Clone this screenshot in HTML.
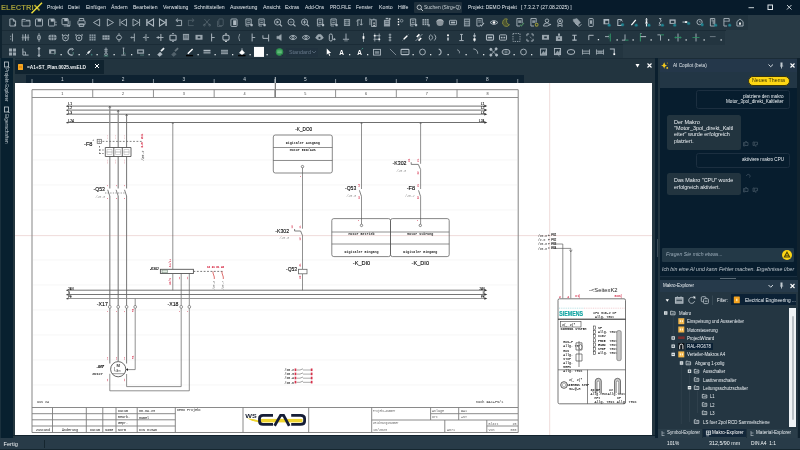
<!DOCTYPE html>
<html><head><meta charset="utf-8"><title>ELECTRIX</title>
<style>
*{margin:0;padding:0;box-sizing:border-box}
html,body{width:800px;height:450px;overflow:hidden;background:#253741;font-family:"Liberation Sans",sans-serif}
.a{position:absolute}
.t{position:absolute;white-space:nowrap;color:#e3e8ec;font-size:5.6px;line-height:7px}
#title{left:0;top:0;width:800px;height:15px;background:#071b2b}
#tb{left:0;top:15px;width:800px;height:43px;background:#283a45}
#lside{left:0;top:58px;width:15px;height:380px;background:#08202f}
#canvas{left:15px;top:83px;width:637px;height:352px;background:#fff}
#status{left:0;top:438px;width:800px;height:12px;background:#283b48}
.m{top:4px}
</style></head><body><div id="w" style="position:absolute;left:0;top:0;width:800px;height:450px;will-change:transform">

<div class="a" id="title"></div>
<div class="a" style="left:1px;top:3.4px;font-size:7.6px;line-height:9px;font-weight:bold;color:#9c9838;white-space:nowrap">ELECTRI</div>
<svg class="a" style="left:30px;top:0" width="16" height="15" viewBox="30 0 16 15"><path d="M34.5 5L39.5 10.5" stroke="#b5a82e" stroke-width="1.7"/><path d="M31.5 13.3L42 2.8" stroke="#efe03a" stroke-width="1.5"/></svg>
<div class="t" style="left:47px;top:4px;font-size:5.7px;color:#e6ebef;transform:scaleX(0.9019);transform-origin:0 0;">Projekt</div>
<div class="t" style="left:68.3px;top:4px;font-size:5.7px;color:#e6ebef;transform:scaleX(0.8792);transform-origin:0 0;">Datei</div>
<div class="t" style="left:85.5px;top:4px;font-size:5.7px;color:#e6ebef;transform:scaleX(0.8888);transform-origin:0 0;">Einfügen</div>
<div class="t" style="left:110.8px;top:4px;font-size:5.7px;color:#e6ebef;transform:scaleX(0.9085);transform-origin:0 0;">Ändern</div>
<div class="t" style="left:132.5px;top:4px;font-size:5.7px;color:#e6ebef;transform:scaleX(0.8886);transform-origin:0 0;">Bearbeiten</div>
<div class="t" style="left:162.5px;top:4px;font-size:5.7px;color:#e6ebef;transform:scaleX(0.9041);transform-origin:0 0;">Verwaltung</div>
<div class="t" style="left:193.8px;top:4px;font-size:5.7px;color:#e6ebef;transform:scaleX(0.9055);transform-origin:0 0;">Schnittstellen</div>
<div class="t" style="left:229.5px;top:4px;font-size:5.7px;color:#e6ebef;transform:scaleX(0.9136);transform-origin:0 0;">Auswertung</div>
<div class="t" style="left:262.5px;top:4px;font-size:5.7px;color:#e6ebef;transform:scaleX(0.9362);transform-origin:0 0;">Ansicht</div>
<div class="t" style="left:285px;top:4px;font-size:5.7px;color:#e6ebef;transform:scaleX(0.8852);transform-origin:0 0;">Extras</div>
<div class="t" style="left:304.5px;top:4px;font-size:5.7px;color:#e6ebef;transform:scaleX(0.8580);transform-origin:0 0;">Add-Ons</div>
<div class="t" style="left:329.5px;top:4px;font-size:5.7px;color:#e6ebef;transform:scaleX(0.8085);transform-origin:0 0;">PRO.FILE</div>
<div class="t" style="left:356.3px;top:4px;font-size:5.7px;color:#e6ebef;transform:scaleX(0.8642);transform-origin:0 0;">Fenster</div>
<div class="t" style="left:378.8px;top:4px;font-size:5.7px;color:#e6ebef;transform:scaleX(0.9197);transform-origin:0 0;">Konto</div>
<div class="t" style="left:397.5px;top:4px;font-size:5.7px;color:#e6ebef;transform:scaleX(0.9208);transform-origin:0 0;">Hilfe</div>
<div class="a" style="left:413.8px;top:2px;width:48.7px;height:11px;background:#1f303c;border-radius:1px"></div>
<svg class="a" style="left:416px;top:4px" width="8" height="8" viewBox="0 0 8 8"><circle cx="3.3" cy="3.3" r="2.2" stroke="#cfd6db" fill="none" stroke-width=".8"/><path d="M5 5L7 7" stroke="#cfd6db" stroke-width=".9"/></svg>
<div class="t" style="left:423.8px;top:4px;font-size:5.7px;color:#c9d1d6;transform:scaleX(0.8619);transform-origin:0 0;">Suchen (Strg+Q)</div>
<div class="t" style="left:468px;top:4px;font-size:5.7px;color:#e6ebef;transform:scaleX(0.8547);transform-origin:0 0;">Projekt: DEMO Projekt</div>
<div class="t" style="left:520.5px;top:4px;font-size:5.7px;color:#e6ebef;transform:scaleX(0.8808);transform-origin:0 0;">[ 7.3.2.7 (27.08.2025) ]</div>
<svg class="a" style="left:740px;top:0" width="60" height="15" viewBox="740 0 60 15"><path d="M748.5 7.7H754" stroke="#dfe5e9" stroke-width=".9"/><rect x="768" y="5" width="4.5" height="4.5" stroke="#dfe5e9" fill="none" stroke-width="1"/><path d="M787 5L791.5 9.5M791.5 5L787 9.5" stroke="#dfe5e9" stroke-width=".9"/></svg>
<div class="a" id="tb"></div>
<div class="a" style="left:0;top:15px;width:2px;height:43px;background:#10232f"></div>
<div class="a" style="left:2px;top:15px;width:745.5px;height:15px;background:#233540"></div>
<div class="a" style="left:2px;top:30px;width:723px;height:15px;background:#233540"></div>
<div class="a" style="left:2px;top:45px;width:621px;height:13px;background:#233540"></div>
<div class="a" style="left:2px;top:29.5px;width:724px;height:1px;background:#1a2b36"></div>
<div class="a" style="left:2px;top:44px;width:621px;height:1px;background:#1a2b36"></div>
<div class="a" style="left:286px;top:47.5px;width:32px;height:9px;background:#21323f;border-radius:1px"></div>
<div class="t" style="left:289px;top:48.5px;color:#66788a;font-size:5.4px">Standard</div>
<svg class="a" style="left:310px;top:49px" width="8" height="6" viewBox="0 0 8 6"><path d="M2 2L4 4L6 2" stroke="#5a6c7c" fill="none" stroke-width=".8"/></svg>
<svg class="a" style="left:0;top:0" width="800" height="60" viewBox="0 0 800 60" fill="none" stroke-linecap="butt"><g transform="translate(12.5,22.5) scale(0.88)"><path d="M-3-4H1L3.5-1.5V4H-3Z" stroke="#aeb9c1" fill="none" stroke-width="1" opacity="1"/><path d="M1-4V-1.5H3.5" stroke="#aeb9c1" fill="none" stroke-width="1" opacity="1"/><rect x="2" y="2" width="1.6" height="1.6" rx="0" stroke="none" fill="#aeb9c1" stroke-width="1" opacity="1"/></g><g transform="translate(26,22.5) scale(0.88)"><path d="M-4.5-3.5H-1L0-2.5H4.5V4H-4.5Z" stroke="#aeb9c1" fill="none" stroke-width="1" opacity="1"/><path d="M-4.5-1.5H4.5" stroke="#aeb9c1" fill="none" stroke-width="1" opacity="0.6"/></g><g transform="translate(39,22.5) scale(0.88)"><rect x="-4" y="-4" width="8" height="8" rx="0.8" stroke="#aeb9c1" fill="none" stroke-width="1" opacity="1"/><rect x="-1.5" y="-4" width="4" height="3" rx="0" stroke="none" fill="#aeb9c1" stroke-width="1" opacity="1"/></g><g transform="translate(52.5,22.5) scale(0.88)"><rect x="-4.5" y="-4" width="7" height="8" rx="0.8" stroke="#aeb9c1" fill="none" stroke-width="1" opacity="1"/><rect x="-2" y="-4" width="3.5" height="3" rx="0" stroke="none" fill="#aeb9c1" stroke-width="1" opacity="1"/><rect x="3.3" y="-1" width="1.2" height="1.2" rx="0" stroke="none" fill="#aeb9c1" stroke-width="1" opacity="1"/><rect x="3.3" y="2" width="1.4" height="1.4" rx="0" stroke="none" fill="#aeb9c1" stroke-width="1" opacity="1"/></g><g transform="translate(66,22.5) scale(0.88)"><rect x="-4.5" y="-4.5" width="7" height="7" rx="0.8" stroke="#aeb9c1" fill="none" stroke-width="1" opacity="1"/><rect x="-2" y="-4.5" width="4" height="3" rx="0" stroke="none" fill="#aeb9c1" stroke-width="1" opacity="1"/><path d="M-2.5 4H4.5V-2" stroke="#aeb9c1" fill="none" stroke-width="1" opacity="0.8"/><rect x="1" y="3" width="3.5" height="1.5" rx="0" stroke="none" fill="#aeb9c1" stroke-width="1" opacity="0.8"/></g><g transform="translate(81.5,22.5) scale(0.88)"><rect x="-4" y="-2" width="8" height="4.5" rx="0.8" stroke="#aeb9c1" fill="none" stroke-width="1" opacity="1"/><path d="M-2.5-2V-4.5H2.5V-2" stroke="#aeb9c1" fill="none" stroke-width="1" opacity="1"/><path d="M-2.5 1.5H2.5V4.5H-2.5Z" stroke="#aeb9c1" fill="none" stroke-width="1" opacity="1"/></g><g transform="translate(97,22.5) scale(0.88)"><path d="M3-4V4L-4 0Z" stroke="#aeb9c1" fill="none" stroke-width="1" opacity="1"/></g><g transform="translate(110,22.5) scale(0.88)"><path d="M-3-4V4L4 0Z" stroke="#aeb9c1" fill="none" stroke-width="1" opacity="1"/></g><g transform="translate(123,22.5) scale(0.88)"><path d="M4-4V4L-2.5 0Z" stroke="#aeb9c1" fill="none" stroke-width="1" opacity="1"/><path d="M-3.5-4V4" stroke="#aeb9c1" fill="none" stroke-width="1" opacity="1"/></g><g transform="translate(136.5,22.5) scale(0.88)"><path d="M-4-4V4L2.5 0Z" stroke="#aeb9c1" fill="none" stroke-width="1" opacity="1"/><path d="M3.5-4V4" stroke="#aeb9c1" fill="none" stroke-width="1" opacity="1"/></g><g transform="translate(150,22.5) scale(0.88)"><path d="M4-4V4L-2.5 0Z" stroke="#aeb9c1" fill="none" stroke-width="1.2" opacity="1"/><path d="M-3.5-4V4" stroke="#aeb9c1" fill="none" stroke-width="1.6" opacity="1"/></g><g transform="translate(163,22.5) scale(0.88)"><path d="M-4-4V4L2.5 0Z" stroke="#aeb9c1" fill="none" stroke-width="1.2" opacity="1"/><path d="M3.5-4V4" stroke="#aeb9c1" fill="none" stroke-width="1.6" opacity="1"/></g><g transform="translate(178.5,22.5) scale(0.88)"><path d="M-2-2.5H3.5V3.5H-2.5" stroke="#aeb9c1" fill="none" stroke-width="1" opacity="1"/><path d="M-0.5-4.5L-3-2.5L-0.5-0.5" stroke="#aeb9c1" fill="none" stroke-width="1" opacity="1"/></g><g transform="translate(191.5,22.5) scale(0.88)"><path d="M2-2.5H-3.5V3.5H2.5" stroke="#aeb9c1" fill="none" stroke-width="1" opacity="0.3"/><path d="M0.5-4.5L3-2.5L0.5-0.5" stroke="#aeb9c1" fill="none" stroke-width="1" opacity="0.3"/></g><g transform="translate(207,22.5) scale(0.88)"><path d="M-3-4L3 3M3-4L-3 3" stroke="#aeb9c1" fill="none" stroke-width="1" opacity="0.3"/><circle cx="-3" cy="3" r="1" stroke="#aeb9c1" fill="none" stroke-width="1" opacity="0.3"/><circle cx="3" cy="3" r="1" stroke="#aeb9c1" fill="none" stroke-width="1" opacity="0.3"/></g><g transform="translate(221,22.5) scale(0.88)"><rect x="-2.5" y="-4" width="5" height="7.5" rx="0.8" stroke="#aeb9c1" fill="none" stroke-width="1" opacity="0.3"/><path d="M-4-2V4.5H1" stroke="#aeb9c1" fill="none" stroke-width="1" opacity="0.3"/></g><g transform="translate(234,22.5) scale(0.88)"><rect x="-3.5" y="-4" width="7" height="8.5" rx="1" stroke="#aeb9c1" fill="none" stroke-width="1" opacity="1"/><rect x="-1" y="-2.5" width="3.5" height="5.5" rx="0" stroke="none" fill="#aeb9c1" stroke-width="1" opacity="1"/></g><g transform="translate(249,22.5) scale(0.88)"><path d="M-3.5-4H2.5V2H-3.5Z" stroke="#aeb9c1" fill="none" stroke-width="1" opacity="1"/><path d="M-2-2H1M-2 0H1" stroke="#aeb9c1" fill="none" stroke-width="1" opacity="0.8"/><rect x="1.6" y="1.6" width="2.6" height="2.6" rx="0.5" stroke="none" fill="#aeb9c1" stroke-width="1" opacity="1"/><path d="M-3.5 2V4H0" stroke="#aeb9c1" fill="none" stroke-width="1" opacity="0.8"/></g><g transform="translate(262,22.5) scale(0.88)"><path d="M-3.5-4H2.5V2H-3.5Z" stroke="#aeb9c1" fill="none" stroke-width="1" opacity="1"/><path d="M-2-2H1M-2 0H1" stroke="#aeb9c1" fill="none" stroke-width="1" opacity="0.8"/><rect x="1.6" y="1.6" width="2.6" height="2.6" rx="0.5" stroke="none" fill="#aeb9c1" stroke-width="1" opacity="1"/><path d="M-3.5 2V4H0" stroke="#aeb9c1" fill="none" stroke-width="1" opacity="0.8"/></g><g transform="translate(278,22.5) scale(0.88)"><circle cx="-0.5" cy="-0.5" r="3.5" stroke="#aeb9c1" fill="none" stroke-width="1" opacity="1"/><path d="M2 2L4.5 4.5" stroke="#aeb9c1" fill="none" stroke-width="1.3" opacity="1"/><path d="M-1.5-2L1-.5L-1.5 1Z" stroke="#aeb9c1" fill="#aeb9c1" stroke-width="0.3" opacity="1"/></g><g transform="translate(291.5,22.5) scale(0.88)"><circle cx="-0.5" cy="-0.5" r="3.5" stroke="#aeb9c1" fill="none" stroke-width="1" opacity="1"/><path d="M2 2L4.5 4.5" stroke="#aeb9c1" fill="none" stroke-width="1.3" opacity="1"/><path d="M-2-.5H1" stroke="#aeb9c1" fill="none" stroke-width="1" opacity="0.8"/></g><g transform="translate(305,22.5) scale(0.88)"><circle cx="-0.5" cy="-0.5" r="3.5" stroke="#aeb9c1" fill="none" stroke-width="1" opacity="1"/><path d="M2 2L4.5 4.5" stroke="#aeb9c1" fill="none" stroke-width="1.3" opacity="1"/><path d="M-2.5-.5H1.5M-.5-2.5V1.5" stroke="#aeb9c1" fill="none" stroke-width="1" opacity="1"/></g><g transform="translate(320.5,22.5) scale(0.88)"><path d="M-3.5-4H2.5V2H-3.5Z" stroke="#aeb9c1" fill="none" stroke-width="1" opacity="1"/><path d="M-2-2H1M-2 0H1" stroke="#aeb9c1" fill="none" stroke-width="1" opacity="0.8"/><rect x="1.6" y="1.6" width="2.6" height="2.6" rx="0.5" stroke="none" fill="#aeb9c1" stroke-width="1" opacity="1"/><path d="M-3.5 2V4H0" stroke="#aeb9c1" fill="none" stroke-width="1" opacity="0.8"/></g><g transform="translate(334,22.5) scale(0.88)"><path d="M-3.5-4H2.5V2H-3.5Z" stroke="#aeb9c1" fill="none" stroke-width="1" opacity="1"/><path d="M-2-2H1M-2 0H1" stroke="#aeb9c1" fill="none" stroke-width="1" opacity="0.8"/><rect x="1.6" y="1.6" width="2.6" height="2.6" rx="0.5" stroke="none" fill="#aeb9c1" stroke-width="1" opacity="1"/><path d="M-3.5 2V4H0" stroke="#aeb9c1" fill="none" stroke-width="1" opacity="0.8"/></g><g transform="translate(347,22.5) scale(0.88)"><rect x="-3.5" y="-4" width="7" height="8" rx="0" stroke="none" fill="#aeb9c1" stroke-width="1" opacity="0.75"/><path d="M-2.5-2H2.5M-2.5 0H2.5M-2.5 2H2.5M0-3V3" stroke="#233540" fill="none" stroke-width="0.7" opacity="1"/></g><g transform="translate(360,22.5) scale(0.88)"><path d="M-2.5 4V-3L-4-1.5M-2.5-3H0" stroke="#aeb9c1" fill="none" stroke-width="1" opacity="1"/><path d="M1.5-4V3L3 1.5M1.5 3L0 1.5" stroke="#aeb9c1" fill="none" stroke-width="1" opacity="1"/></g><g transform="translate(373,22.5) scale(0.88)"><rect x="-1.5" y="-3" width="5" height="7.5" rx="0" stroke="#aeb9c1" fill="none" stroke-width="1" opacity="1"/><path d="M-3.5-4V3" stroke="#aeb9c1" fill="none" stroke-width="1" opacity="0.9"/><path d="M-3.5-4.5L-2-3M1-4.5V-3" stroke="#aeb9c1" fill="none" stroke-width="1" opacity="1"/><rect x="0.5" y="2.6" width="1.4" height="1.4" rx="0" stroke="none" fill="#fff" stroke-width="1" opacity="1"/><rect x="0.5" y="0" width="1.4" height="1.4" rx="0" stroke="none" fill="#fff" stroke-width="1" opacity="1"/></g><g transform="translate(387,22.5) scale(0.88)"><rect x="-3.5" y="-3" width="7" height="7.5" rx="0" stroke="none" fill="#aeb9c1" stroke-width="1" opacity="0.8"/><path d="M-1.5-4.5H1.5" stroke="#aeb9c1" fill="none" stroke-width="1.5" opacity="1"/><path d="M2-4L4-5M-2-1H2M-2 1H2" stroke="#233540" fill="none" stroke-width="0.6" opacity="1"/><rect x="2" y="-5" width="2" height="2" rx="0" stroke="none" fill="#aeb9c1" stroke-width="1" opacity="1"/></g><g transform="translate(398.5,22.5) scale(0.88)"><rect x="-0.8" y="-4.5" width="1.6" height="1.6" rx="0" stroke="none" fill="#fff" stroke-width="1" opacity="1"/><rect x="-0.8" y="-1.5" width="1.6" height="1.6" rx="0" stroke="none" fill="#fff" stroke-width="1" opacity="1"/><rect x="-0.8" y="1.5" width="1.6" height="1.6" rx="0" stroke="none" fill="#fff" stroke-width="1" opacity="1"/></g><g transform="translate(402.5,22.5) scale(0.88)"><circle cx="-1" cy="-2" r="1.5" stroke="#aeb9c1" fill="none" stroke-width="1" opacity="0.7"/></g><g transform="translate(413.5,22.5) scale(0.88)"><path d="M-3.5-4H2.5V2H-3.5Z" stroke="#aeb9c1" fill="none" stroke-width="1" opacity="1"/><path d="M-2-2H1M-2 0H1" stroke="#aeb9c1" fill="none" stroke-width="1" opacity="0.8"/><rect x="1.6" y="1.6" width="2.6" height="2.6" rx="0.5" stroke="none" fill="#aeb9c1" stroke-width="1" opacity="1"/><path d="M-3.5 2V4H0" stroke="#aeb9c1" fill="none" stroke-width="1" opacity="0.8"/></g><g transform="translate(426,22.5) scale(0.88)"><rect x="-4" y="-4" width="7" height="7" rx="0" stroke="none" fill="#aeb9c1" stroke-width="1" opacity="0.9"/><path d="M-1.7-4V3M.7-4V3M-4-1.7H3M-4 .7H3" stroke="#233540" fill="none" stroke-width="0.7" opacity="1"/><rect x="2" y="2" width="2.5" height="2.5" rx="0" stroke="none" fill="#aeb9c1" stroke-width="1" opacity="0.7"/></g><g transform="translate(440,22.5) scale(0.88)"><circle cx="0" cy="0" r="4" stroke="none" fill="#8a949b" stroke-width="1" opacity="1"/><path d="M-4-1A4 2 0 0 1 4-1" stroke="#c8d0d5" fill="none" stroke-width="0.7" opacity="1"/></g><g transform="translate(453,22.5) scale(0.88)"><rect x="-4" y="-2.5" width="8" height="5" rx="0.8" stroke="#aeb9c1" fill="none" stroke-width="1" opacity="1"/><rect x="-2.5" y="-1" width="5" height="2" rx="0" stroke="none" fill="#aeb9c1" stroke-width="1" opacity="1"/></g><g transform="translate(467,22.5) scale(0.88)"><rect x="-3.5" y="-4.5" width="7" height="9" rx="0" stroke="none" fill="#aeb9c1" stroke-width="1" opacity="0.75"/><path d="M-2.5-2.5H2.5" stroke="#233540" fill="none" stroke-width="1" opacity="1"/><path d="M-2.5 0H2.5M-2.5 2H2.5M-1-1V3.5M1-1V3.5" stroke="#233540" fill="none" stroke-width="0.6" opacity="1"/></g><g transform="translate(480,22.5) scale(0.88)"><path d="M-3.5-4.5H2.5V1M-3.5-4.5V4H0" stroke="#aeb9c1" fill="none" stroke-width="1" opacity="1"/><path d="M-2-2.5H1M-2-.5H1" stroke="#aeb9c1" fill="none" stroke-width="1" opacity="0.8"/><path d="M0 2.5L1.5 4L4.5 .5" stroke="#aeb9c1" fill="none" stroke-width="1.2" opacity="1"/></g><g transform="translate(494,22.5) scale(0.88)"><path d="M-4.5 0Q0-4.5 4.5 0Q0 4.5-4.5 0Z" stroke="#aeb9c1" fill="none" stroke-width="1" opacity="1"/><circle cx="0" cy="0" r="1.5" stroke="none" fill="#fff" stroke-width="1" opacity="1"/></g><g transform="translate(506,22.5) scale(0.88)"><path d="M1.5-4A4.3 4.3 0 1 0 4 2.5A4 4 0 0 1 1.5-4Z" stroke="#8f9440" fill="#4a5232" stroke-width="0.9" opacity="1"/></g><g transform="translate(520,22.5) scale(0.88)"><path d="M-3.5-4.5H2.5V1M-3.5-4.5V4H0" stroke="#aeb9c1" fill="none" stroke-width="1" opacity="1"/><rect x="-2" y="-2.5" width="3.5" height="3" rx="0" stroke="none" fill="#aeb9c1" stroke-width="1" opacity="0.7"/><path d="M0 2.5L1.5 4L4.5 .5" stroke="#4d8b62" fill="none" stroke-width="1.2" opacity="1"/></g><g transform="translate(534,22.5) scale(0.88)"><path d="M-3.5-4.5H2.5V0M-3.5-4.5V4H0" stroke="#aeb9c1" fill="none" stroke-width="1" opacity="1"/><rect x="-2" y="-2.5" width="3.5" height="3" rx="0" stroke="none" fill="#aeb9c1" stroke-width="1" opacity="0.7"/><circle cx="3" cy="2.5" r="1.6" stroke="#97983c" fill="none" stroke-width="1.2" opacity="1"/></g><g transform="translate(547,22.5) scale(0.88)"><circle cx="0" cy="-2" r="2" stroke="#aeb9c1" fill="none" stroke-width="1" opacity="1"/><path d="M-4 4Q-4 .5 0 .5Q2 .5 3 2M-4 4H1" stroke="#aeb9c1" fill="none" stroke-width="1" opacity="1"/><path d="M1 3.5L4.5 2" stroke="#aeb9c1" fill="none" stroke-width="1.2" opacity="1"/></g><g transform="translate(560,22.5) scale(0.88)"><circle cx="0" cy="-1.5" r="2.8" stroke="#aeb9c1" fill="none" stroke-width="1" opacity="1"/><circle cx="0" cy="-1.5" r="0.8" stroke="#aeb9c1" fill="#aeb9c1" stroke-width="1" opacity="1"/><path d="M-2 1L-2.5 4.5L0 3L2.5 4.5L2 1" stroke="#aeb9c1" fill="none" stroke-width="1" opacity="1"/></g><g transform="translate(577,22.5) scale(0.88)"><path d="M-4.5-3.5L0-4.5L4 0L.5 3.5L-4-1Z" stroke="#aeb9c1" fill="#aeb9c1" stroke-width="0.5" opacity="0.8"/><path d="M-2 1L2.5 4.5L5 2" stroke="#aeb9c1" fill="none" stroke-width="1" opacity="1"/></g><g transform="translate(591,22.5) scale(0.88)"><rect x="-2.5" y="-4.5" width="5" height="9" rx="0.8" stroke="#aeb9c1" fill="none" stroke-width="1" opacity="1"/><rect x="-1" y="-2.5" width="2" height="4" rx="0" stroke="none" fill="#aeb9c1" stroke-width="1" opacity="1"/></g><g transform="translate(607,22.5) scale(0.88)"><rect x="-4" y="-4" width="6.5" height="6" rx="0" stroke="none" fill="#aeb9c1" stroke-width="1" opacity="1"/><rect x="-2" y="-2" width="3.5" height="3" rx="0" stroke="none" fill="#233540" stroke-width="1" opacity="1"/><circle cx="2.5" cy="3" r="2.2" stroke="none" fill="#1f7f8c" stroke-width="1" opacity="0.35"/><circle cx="2.5" cy="3" r="1.4" stroke="none" fill="#1f8592" stroke-width="1" opacity="1"/></g><g transform="translate(620,22.5) scale(0.88)"><path d="M-2.5-3.5H1.5V-2M1.5 2V3.5H-2.5V-3.5" stroke="#aeb9c1" fill="none" stroke-width="1.2" opacity="1"/><path d="M0-1L1.5-3L3-1" stroke="#aeb9c1" fill="none" stroke-width="0.8" opacity="1"/><circle cx="3" cy="2.5" r="2.2" stroke="none" fill="#1f7f8c" stroke-width="1" opacity="0.35"/><circle cx="3" cy="2.5" r="1.4" stroke="none" fill="#1f8592" stroke-width="1" opacity="1"/></g><g transform="translate(634,22.5) scale(0.88)"><path d="M-3 3L2-3" stroke="#fff" fill="none" stroke-width="1.4" opacity="1"/><circle cx="2.5" cy="3" r="2.2" stroke="none" fill="#1f7f8c" stroke-width="1" opacity="0.35"/><circle cx="2.5" cy="3" r="1.4" stroke="none" fill="#1f8592" stroke-width="1" opacity="1"/></g><g transform="translate(646.5,22.5) scale(0.88)"><path d="M0-5V4.5" stroke="#e8edf0" fill="none" stroke-width="1.3" opacity="1"/><path d="M-1.5-3H1.5M-1.5 1H1.5" stroke="#aeb9c1" fill="none" stroke-width="1" opacity="1"/><rect x="-1" y="-1" width="2" height="1.5" rx="0" stroke="none" fill="#fff" stroke-width="1" opacity="1"/><circle cx="2.8" cy="3" r="2.2" stroke="none" fill="#1f7f8c" stroke-width="1" opacity="0.35"/><circle cx="2.8" cy="3" r="1.4" stroke="none" fill="#1f8592" stroke-width="1" opacity="1"/></g><g transform="translate(660,22.5) scale(0.88)"><path d="M-1-4.5H1.5M0-4.5L1.5-1.5L-1 .5L1 3H-1.5" stroke="#aeb9c1" fill="none" stroke-width="1" opacity="1"/><circle cx="2.8" cy="3" r="2.2" stroke="none" fill="#1f7f8c" stroke-width="1" opacity="0.35"/><circle cx="2.8" cy="3" r="1.4" stroke="none" fill="#1f8592" stroke-width="1" opacity="1"/></g><g transform="translate(673,22.5) scale(0.88)"><rect x="-4" y="-3.5" width="7" height="5" rx="0" stroke="none" fill="#aeb9c1" stroke-width="1" opacity="1"/><rect x="-2.5" y="-2" width="4" height="2.5" rx="0" stroke="none" fill="#233540" stroke-width="1" opacity="1"/><circle cx="2" cy="3" r="2.2" stroke="none" fill="#1f7f8c" stroke-width="1" opacity="0.35"/><circle cx="2" cy="3" r="1.4" stroke="none" fill="#1f8592" stroke-width="1" opacity="1"/></g><g transform="translate(686,22.5) scale(0.88)"><path d="M-4-.5H2" stroke="#aeb9c1" fill="none" stroke-width="1.2" opacity="1"/><rect x="-1" y="-1.5" width="2" height="2" rx="0" stroke="none" fill="#fff" stroke-width="1" opacity="1"/><circle cx="3" cy="1" r="2.2" stroke="none" fill="#1f7f8c" stroke-width="1" opacity="0.35"/><circle cx="3" cy="1" r="1.4" stroke="none" fill="#1f8592" stroke-width="1" opacity="1"/></g><g transform="translate(700,22.5) scale(0.88)"><circle cx="-0.5" cy="-0.5" r="3" stroke="#aeb9c1" fill="none" stroke-width="1" opacity="1"/><path d="M-.5-2V-.5H1" stroke="#aeb9c1" fill="none" stroke-width="0.7" opacity="1"/><circle cx="2.5" cy="2.5" r="2.2" stroke="none" fill="#1f7f8c" stroke-width="1" opacity="0.35"/><circle cx="2.5" cy="2.5" r="1.4" stroke="none" fill="#1f8592" stroke-width="1" opacity="1"/></g><g transform="translate(713,22.5) scale(0.88)"><path d="M-3-4.5H2V4H-3Z" stroke="#aeb9c1" fill="none" stroke-width="1" opacity="1"/><path d="M-1-4.5V-1" stroke="#aeb9c1" fill="none" stroke-width="1" opacity="0.8"/><rect x="-0.5" y="-3" width="2" height="5" rx="0" stroke="none" fill="#aeb9c1" stroke-width="1" opacity="0.6"/><circle cx="3" cy="3" r="2.2" stroke="none" fill="#1f7f8c" stroke-width="1" opacity="0.35"/><circle cx="3" cy="3" r="1.4" stroke="none" fill="#1f8592" stroke-width="1" opacity="1"/></g><g transform="translate(727,22.5) scale(0.88)"><path d="M-3.5-4.5H2.5V-1M-3.5-4.5V4H0" stroke="#aeb9c1" fill="none" stroke-width="1" opacity="1"/><path d="M-3.5-1.5H2.5" stroke="#aeb9c1" fill="none" stroke-width="1" opacity="0.8"/><circle cx="3" cy="3" r="2.2" stroke="none" fill="#1f7f8c" stroke-width="1" opacity="0.35"/><circle cx="3" cy="3" r="1.4" stroke="none" fill="#1f8592" stroke-width="1" opacity="1"/></g><g transform="translate(740,22.5) scale(0.88)"><path d="M-3.5-1L0-4L3.5-1V4H-3.5Z" stroke="#aeb9c1" fill="none" stroke-width="1" opacity="1"/><rect x="-1" y="0" width="2" height="2.5" rx="0" stroke="none" fill="#fff" stroke-width="1" opacity="1"/></g><g transform="translate(12,37.5) scale(0.88)"><path d="M.5-4.5V4.5" stroke="#aeb9c1" fill="none" stroke-width="1" opacity="1"/><path d="M-1.5-2V-.5M-1.5 1V2.5" stroke="#aeb9c1" fill="none" stroke-width="0.9" opacity="0.8"/></g><g transform="translate(25.5,37.5) scale(0.88)"><path d="M-4.5 0H4.5" stroke="#aeb9c1" fill="none" stroke-width="0.7" opacity="0.7"/><path d="M-3-3.5V3.5M0-4V4M3-3.5V3.5" stroke="#aeb9c1" fill="none" stroke-width="1" opacity="1"/><path d="M-1.5-2V2M1.5-2V2" stroke="#aeb9c1" fill="none" stroke-width="0.7" opacity="0.7"/></g><g transform="translate(39,37.5) scale(0.88)"><path d="M0-5V5" stroke="#aeb9c1" fill="none" stroke-width="0.8" opacity="1"/><rect x="-1.5" y="-2.5" width="3" height="5" rx="1.2" stroke="#aeb9c1" fill="none" stroke-width="1" opacity="1"/></g><g transform="translate(52.5,37.5) scale(0.88)"><rect x="-4.5" y="-3" width="9" height="6" rx="2" stroke="none" fill="#aeb9c1" stroke-width="1" opacity="0.8"/><path d="M-1.5-3.5V4M1.5-3.5V4" stroke="#233540" fill="none" stroke-width="0.8" opacity="1"/><path d="M-4.5 0H4.5" stroke="#233540" fill="none" stroke-width="0.5" opacity="1"/></g><g transform="translate(65.5,37.5) scale(0.88)"><circle cx="0" cy="0.5" r="3.3" stroke="#aeb9c1" fill="none" stroke-width="1" opacity="1"/><path d="M-3.5-4V-1.5M3.5-4V-1.5" stroke="#aeb9c1" fill="none" stroke-width="1" opacity="1"/><rect x="-1" y="-0.5" width="2" height="2" rx="0" stroke="none" fill="#aeb9c1" stroke-width="1" opacity="0.8"/></g><g transform="translate(79,37.5) scale(0.88)"><circle cx="0" cy="0.5" r="3.3" stroke="#aeb9c1" fill="none" stroke-width="1" opacity="1"/><path d="M-3.5-4V-1.5M3.5-4V-1.5" stroke="#aeb9c1" fill="none" stroke-width="1" opacity="1"/><rect x="-1" y="-0.5" width="2" height="2" rx="0" stroke="none" fill="#aeb9c1" stroke-width="1" opacity="0.8"/></g><g transform="translate(92.5,37.5) scale(0.88)"><rect x="-3.5" y="-3.5" width="7" height="7" rx="0" stroke="none" fill="#aeb9c1" stroke-width="1" opacity="0.75"/><path d="M-1.2-4V4M1.2-4V4M-3.5-1.2H3.5M-3.5 1.2H3.5" stroke="#233540" fill="none" stroke-width="0.6" opacity="1"/></g><g transform="translate(106,37.5) scale(0.88)"><rect x="-4" y="-2.5" width="8" height="5" rx="0" stroke="none" fill="#aeb9c1" stroke-width="1" opacity="0.85"/><path d="M-1.5-2.5V2.5M1.5-2.5V2.5M-4 0H4" stroke="#233540" fill="none" stroke-width="0.5" opacity="1"/></g><g transform="translate(119,37.5) scale(0.88)"><path d="M0-5V-2.5M0 2.5V5" stroke="#aeb9c1" fill="none" stroke-width="0.9" opacity="1"/><path d="M-3 0L-1.5-2.5H1.5L3 0L1.5 2.5H-1.5Z" stroke="#aeb9c1" fill="none" stroke-width="1" opacity="1"/></g><g transform="translate(133,37.5) scale(0.88)"><path d="M1.5-4.5V4.5" stroke="#aeb9c1" fill="none" stroke-width="1" opacity="1"/><path d="M-2.5 0H1.5" stroke="#aeb9c1" fill="none" stroke-width="0.9" opacity="1"/><path d="M-1-1.5L-2.5 0L-1 1.5" stroke="#aeb9c1" fill="none" stroke-width="0.7" opacity="0.8"/></g><g transform="translate(146,37.5) scale(0.88)"><path d="M0-4V4" stroke="#aeb9c1" fill="none" stroke-width="1" opacity="0.9"/><path d="M-3.5 0H-1M1 0H3.5" stroke="#aeb9c1" fill="none" stroke-width="0.9" opacity="1"/><path d="M-1.5-1.5L0 0L-1.5 1.5" stroke="#aeb9c1" fill="none" stroke-width="0.7" opacity="1"/></g><g transform="translate(160,37.5) scale(0.88)"><path d="M1-4V4" stroke="#aeb9c1" fill="none" stroke-width="1.1" opacity="1"/><path d="M-4 0H4" stroke="#aeb9c1" fill="none" stroke-width="1" opacity="1"/><path d="M-2-1.5V1.5" stroke="#aeb9c1" fill="none" stroke-width="1.2" opacity="1"/></g><g transform="translate(173,37.5) scale(0.88)"><rect x="-3.5" y="-2.5" width="7" height="5.5" rx="0.8" stroke="#aeb9c1" fill="none" stroke-width="1.2" opacity="1"/><path d="M-1-4.5H1M-1 4.5H1" stroke="#aeb9c1" fill="none" stroke-width="1" opacity="1"/></g><g transform="translate(186,37.5) scale(0.88)"><rect x="-3.5" y="-3" width="7" height="6" rx="0" stroke="none" fill="#aeb9c1" stroke-width="1" opacity="0.7"/><path d="M-1.2-3V1M1.2-3V1" stroke="#233540" fill="none" stroke-width="0.7" opacity="1"/><path d="M-3.5-3.5H3.5" stroke="#aeb9c1" fill="none" stroke-width="1" opacity="1"/></g><g transform="translate(199,37.5) scale(0.88)"><rect x="-4" y="-3" width="8" height="5.5" rx="0" stroke="none" fill="#aeb9c1" stroke-width="1" opacity="0.85"/><rect x="-1.5" y="-1.2" width="3" height="2" rx="0" stroke="none" fill="#233540" stroke-width="1" opacity="1"/></g><g transform="translate(212.5,37.5) scale(0.88)"><path d="M-1-4.5V4.5" stroke="#aeb9c1" fill="none" stroke-width="1.1" opacity="1"/><path d="M-1 0H2.5" stroke="#aeb9c1" fill="none" stroke-width="1" opacity="1"/></g><g transform="translate(226,37.5) scale(0.88)"><rect x="-3.5" y="-2.5" width="7" height="5.5" rx="1.5" stroke="#aeb9c1" fill="none" stroke-width="1.2" opacity="1"/><path d="M-1-4H1M-1 4.5H1" stroke="#fff" fill="none" stroke-width="1" opacity="1"/></g><g transform="translate(239,37.5) scale(0.88)"><path d="M.8-4Q-1.5 0 .8 4" stroke="#aeb9c1" fill="none" stroke-width="1" opacity="0.8"/></g><g transform="translate(253,37.5) scale(0.88)"><path d="M-1-4.5V4.5" stroke="#aeb9c1" fill="none" stroke-width="1.1" opacity="1"/><path d="M-1 0H2.5" stroke="#aeb9c1" fill="none" stroke-width="1" opacity="1"/></g><g transform="translate(266,37.5) scale(0.88)"><path d="M-3.5-2.5V1H3V-3.5M3 1V4.5" stroke="#aeb9c1" fill="none" stroke-width="1.1" opacity="1"/></g><g transform="translate(279.5,37.5) scale(0.88)"><path d="M2-3.5V3.5L-1 1.5H-3V-1.5H-1Z" stroke="#aeb9c1" fill="#aeb9c1" stroke-width="0.5" opacity="0.85"/></g><g transform="translate(293,37.5) scale(0.88)"><path d="M-4.5 0Q0-5 4.5 0Q0 5-4.5 0Z" stroke="#aeb9c1" fill="none" stroke-width="1" opacity="1"/><circle cx="0" cy="0" r="1.3" stroke="#aeb9c1" fill="none" stroke-width="1" opacity="1"/></g><g transform="translate(306,37.5) scale(0.88)"><path d="M-4.5 0Q0-5 4.5 0Q0 5-4.5 0Z" stroke="#aeb9c1" fill="none" stroke-width="1" opacity="1"/><circle cx="0" cy="0" r="1.3" stroke="#aeb9c1" fill="none" stroke-width="1" opacity="1"/></g><g transform="translate(319.5,37.5) scale(0.88)"><path d="M-4.5.5Q-2-4.5 0-3.5Q2-4.5 4.5 .5Q0 5-4.5 .5Z" stroke="#aeb9c1" fill="#aeb9c1" stroke-width="0.6" opacity="0.85"/><circle cx="0" cy="0.5" r="1.3" stroke="none" fill="#233540" stroke-width="1" opacity="1"/></g><g transform="translate(331.5,37.5) scale(0.88)"><rect x="-2.5" y="-4" width="3.5" height="8" rx="1.7" stroke="#aeb9c1" fill="none" stroke-width="1.1" opacity="1"/><path d="M1.5 2H4" stroke="#aeb9c1" fill="none" stroke-width="0.9" opacity="1"/><circle cx="3.5" cy="2" r="0.7" stroke="#aeb9c1" fill="#aeb9c1" stroke-width="1" opacity="1"/></g><g transform="translate(346,37.5) scale(0.88)"><path d="M0-4.5V2" stroke="#aeb9c1" fill="none" stroke-width="1" opacity="1"/><path d="M-3.5 2H3.5" stroke="#aeb9c1" fill="none" stroke-width="1" opacity="1"/><path d="M-2 3.8H2" stroke="#aeb9c1" fill="none" stroke-width="0.8" opacity="0.8"/></g><g transform="translate(363.5,37.5) scale(0.88)"><path d="M0-5V5" stroke="#aeb9c1" fill="none" stroke-width="0.9" opacity="1"/><rect x="-1" y="-1.5" width="2" height="3" rx="0" stroke="none" fill="#fff" stroke-width="1" opacity="1"/></g><g transform="translate(377,37.5) scale(0.88)"><path d="M-2.5-4.5V4.5M2.5-4.5V4.5" stroke="#aeb9c1" fill="none" stroke-width="0.9" opacity="1"/><path d="M-4-2H4M-4 2H4" stroke="#aeb9c1" fill="none" stroke-width="0.9" opacity="1"/><rect x="-3.3" y="-2.8" width="1.6" height="1.6" rx="0" stroke="none" fill="#fff" stroke-width="1" opacity="1"/><rect x="1.7" y="1.2" width="1.6" height="1.6" rx="0" stroke="none" fill="#fff" stroke-width="1" opacity="1"/></g><g transform="translate(390,37.5) scale(0.88)"><path d="M0-4.5V4.5" stroke="#aeb9c1" fill="none" stroke-width="0.9" opacity="1"/><path d="M-1.5-3H1.5M-1.5 3H1.5M-1.5 0H1.5" stroke="#aeb9c1" fill="none" stroke-width="0.9" opacity="1"/></g><g transform="translate(405.5,37.5) scale(0.88)"><path d="M-2 2L2-2" stroke="#fff" fill="none" stroke-width="1.5" opacity="1"/><path d="M-3.5 3.5L-2 2M2-2L3.5-3.5" stroke="#aeb9c1" fill="none" stroke-width="0.6" opacity="1"/></g><g transform="translate(419,37.5) scale(0.88)"><path d="M-4 4L4-4" stroke="#aeb9c1" fill="none" stroke-width="0.8" opacity="1"/><path d="M-2.5-.5L.5-3.5M-.5 3.5L2.5 .5" stroke="#fff" fill="none" stroke-width="1.8" opacity="1"/></g><g transform="translate(432.5,37.5) scale(0.88)"><path d="M-2-3.5Q-5.5 0-2 3.5M2-3.5Q5.5 0 2 3.5M-1-2.5Q1.5 0-1 2.5" stroke="#aeb9c1" fill="none" stroke-width="1" opacity="1"/></g><g transform="translate(448,37.5) scale(0.88)"><rect x="-1" y="-3.5" width="2" height="2" rx="0" stroke="none" fill="#fff" stroke-width="1" opacity="1"/><rect x="-1" y="0" width="2" height="3.5" rx="0" stroke="none" fill="#aeb9c1" stroke-width="1" opacity="1"/></g><g transform="translate(461.5,37.5) scale(0.88)"><path d="M0-3.5V3M-2.5 3.5H2.5M-1.5-3.5H1.5" stroke="#aeb9c1" fill="none" stroke-width="1.1" opacity="1"/></g><g transform="translate(474.5,37.5) scale(0.88)"><path d="M0-5V5" stroke="#aeb9c1" fill="none" stroke-width="0.8" opacity="1"/><rect x="-1.3" y="-3" width="2.6" height="2.2" rx="0" stroke="none" fill="#aeb9c1" stroke-width="1" opacity="1"/><rect x="-1.3" y="1" width="2.6" height="2.6" rx="0" stroke="none" fill="#fff" stroke-width="1" opacity="1"/></g><g transform="translate(490,37.5) scale(0.88)"><rect x="-4" y="-3" width="8" height="6" rx="1" stroke="#aeb9c1" fill="none" stroke-width="1.2" opacity="1"/><rect x="-2.5" y="-0.8" width="5" height="1.8" rx="0" stroke="none" fill="#aeb9c1" stroke-width="1" opacity="1"/></g><g transform="translate(503,37.5) scale(0.88)"><rect x="-4" y="-3" width="8" height="6" rx="1" stroke="#aeb9c1" fill="none" stroke-width="1.1" opacity="1"/><rect x="-2.5" y="-0.8" width="2" height="1.8" rx="0" stroke="none" fill="#aeb9c1" stroke-width="1" opacity="1"/><rect x="0.5" y="-0.8" width="2" height="1.8" rx="0" stroke="none" fill="#aeb9c1" stroke-width="1" opacity="1"/></g><g transform="translate(516.5,37.5) scale(0.88)"><rect x="-4" y="-4.5" width="8" height="9" stroke="#aeb9c1" fill="none" stroke-width=".9" stroke-dasharray="1.5 1.2"/></g><g transform="translate(530,37.5) scale(0.88)"><path d="M-3.5-1.5V-4H-1M1.5-4H3.5V-1.5M3.5 1.5V4H1M-1 4H-3.5V1.5" stroke="#aeb9c1" fill="none" stroke-width="1" opacity="1"/><path d="M0-1L1.5 1" stroke="#aeb9c1" fill="none" stroke-width="0.8" opacity="0.7"/></g><g transform="translate(545.5,37.5) scale(0.88)"><rect x="-4" y="-3" width="8" height="5.5" rx="0" stroke="none" fill="#aeb9c1" stroke-width="1" opacity="0.85"/><rect x="-1.5" y="-1.2" width="3" height="2" rx="0" stroke="none" fill="#233540" stroke-width="1" opacity="1"/></g><g transform="translate(559,37.5) scale(0.88)"><rect x="-3.5" y="-1.5" width="7" height="5.5" rx="0" stroke="none" fill="#aeb9c1" stroke-width="1" opacity="0.85"/><rect x="-1" y="-4.5" width="2" height="2.5" rx="0" stroke="none" fill="#aeb9c1" stroke-width="1" opacity="1"/><rect x="-0.8" y="0.3" width="1.6" height="1.6" rx="0" stroke="none" fill="#233540" stroke-width="1" opacity="1"/></g><g transform="translate(574.5,37.5) scale(0.88)"><path d="M-2.5-2.5H2.5M-2.5 3H2.5M0-2.5V3" stroke="#aeb9c1" fill="none" stroke-width="1.2" opacity="1"/></g><g transform="translate(591,37.5) scale(0.88)"><path d="M-2.5 3V-2.5H3" stroke="#aeb9c1" fill="none" stroke-width="1.1" opacity="1"/></g><rect x="597.8" y="39" width="1.3" height="1.3" fill="#dfe5e9"/><g transform="translate(609,37.5) scale(0.88)"><path d="M-4.5-1H0" stroke="#aeb9c1" fill="none" stroke-width="1" opacity="1"/><path d="M1.5-4.5V4.5" stroke="#2f9a68" fill="none" stroke-width="1" opacity="1"/><path d="M-1-3L1.5-1L-1 1" stroke="#2f9a68" fill="none" stroke-width="0.8" opacity="0.8"/></g><rect x="616.5" y="39.3" width="1.3" height="1.3" fill="#dfe5e9"/><g transform="translate(625,37.5) scale(0.88)"><path d="M-3.5 3H0V-3.5" stroke="#aeb9c1" fill="none" stroke-width="1" opacity="1"/><path d="M0 3H4" stroke="#2f9a68" fill="none" stroke-width="1" opacity="1"/></g><rect x="632.5" y="39.3" width="1.3" height="1.3" fill="#dfe5e9"/><g transform="translate(643,37.5) scale(0.88)"><path d="M-3-4.5V4.5" stroke="#2f9a68" fill="none" stroke-width="1.1" opacity="1"/><path d="M-3-1H3.5" stroke="#aeb9c1" fill="none" stroke-width="1.2" opacity="1"/><path d="M-3-4.5H-1.5" stroke="#aeb9c1" fill="none" stroke-width="0.8" opacity="1"/></g><rect x="650.5" y="39.3" width="1.3" height="1.3" fill="#dfe5e9"/><g transform="translate(660.5,37.5) scale(0.88)"><path d="M-3.5-3H0V3.5" stroke="#aeb9c1" fill="none" stroke-width="1" opacity="1"/><path d="M0-3H4" stroke="#2f9a68" fill="none" stroke-width="1" opacity="1"/></g><rect x="668" y="39.3" width="1.3" height="1.3" fill="#dfe5e9"/><g transform="translate(678,37.5) scale(0.88)"><path d="M0-4.5V4.5" stroke="#aeb9c1" fill="none" stroke-width="1" opacity="1"/><path d="M-4 0H4" stroke="#2f9a68" fill="none" stroke-width="0.9" opacity="1"/><path d="M-2.5-1.5V1.5M2.5-1.5V1.5" stroke="#2f9a68" fill="none" stroke-width="0.7" opacity="1"/></g><rect x="685.5" y="39.3" width="1.3" height="1.3" fill="#dfe5e9"/><g transform="translate(696,37.5) scale(0.88)"><path d="M0-4.5V4.5" stroke="#aeb9c1" fill="none" stroke-width="1" opacity="1"/><path d="M-4 0H4" stroke="#2f9a68" fill="none" stroke-width="0.9" opacity="1"/></g><rect x="703.5" y="39.3" width="1.3" height="1.3" fill="#dfe5e9"/><g transform="translate(713,37.5) scale(0.88)"><path d="M-3.5-1H3" stroke="#aeb9c1" fill="none" stroke-width="1" opacity="0.6"/></g><rect x="720.5" y="39.3" width="1.3" height="1.3" fill="#dfe5e9"/><g transform="translate(12.5,52) scale(0.88)"><rect x="-4" y="-4" width="3.5" height="3.5" rx="0" stroke="none" fill="#aeb9c1" stroke-width="1" opacity="0.85"/><rect x="0.5" y="-4" width="3.5" height="3.5" rx="0" stroke="none" fill="#aeb9c1" stroke-width="1" opacity="0.85"/><rect x="-4" y="0.5" width="3.5" height="3.5" rx="0" stroke="none" fill="#aeb9c1" stroke-width="1" opacity="0.85"/><rect x="0.5" y="0.5" width="3.5" height="3.5" rx="0" stroke="none" fill="#aeb9c1" stroke-width="1" opacity="0.85"/></g><g transform="translate(25.5,52) scale(0.88)"><path d="M-3-4V3.5H3.5" stroke="#aeb9c1" fill="none" stroke-width="1.1" opacity="1"/><path d="M-3 0H0V3.5" stroke="#aeb9c1" fill="none" stroke-width="0.9" opacity="1"/></g><g transform="translate(39,52) scale(0.88)"><path d="M0-3.5V3.5" stroke="#aeb9c1" fill="none" stroke-width="1.1" opacity="1"/><circle cx="0" cy="-4" r="1" stroke="#aeb9c1" fill="#aeb9c1" stroke-width="1" opacity="1"/><circle cx="0" cy="4" r="1" stroke="#aeb9c1" fill="#aeb9c1" stroke-width="1" opacity="1"/></g><g transform="translate(53,52) scale(0.88)"><rect x="-4.5" y="-3" width="7.5" height="5" rx="0" stroke="none" fill="#aeb9c1" stroke-width="1" opacity="0.85"/><rect x="-2" y="-1" width="3.5" height="2.5" rx="0" stroke="none" fill="#233540" stroke-width="1" opacity="1"/><path d="M1 3L3.5 1.5" stroke="#5a8a80" fill="none" stroke-width="0.8" opacity="1"/></g><rect x="60.5" y="54" width="1.3" height="1.3" fill="#dfe5e9"/><g transform="translate(71,52) scale(0.88)"><path d="M2-3A3.5 3.5 0 1 0 2 3" stroke="#aeb9c1" fill="none" stroke-width="1.3" opacity="1"/><path d="M1-4.5L3-3L1-1.5" stroke="#aeb9c1" fill="none" stroke-width="0.8" opacity="1"/><path d="M2.5 0V3" stroke="#5a8a80" fill="none" stroke-width="1" opacity="1"/></g><rect x="78.5" y="54" width="1.3" height="1.3" fill="#dfe5e9"/><g transform="translate(89,52) scale(0.88)"><path d="M-3.5 3.5L3-3" stroke="#aeb9c1" fill="none" stroke-width="0.8" opacity="1"/><path d="M-1.5 1.5L1-1" stroke="#e8edf0" fill="none" stroke-width="2" opacity="1"/><circle cx="3" cy="3" r="1" stroke="none" fill="#3d7a78" stroke-width="1" opacity="1"/></g><rect x="96.5" y="54" width="1.3" height="1.3" fill="#dfe5e9"/><g transform="translate(106,52) scale(0.88)"><path d="M0-5V1" stroke="#aeb9c1" fill="none" stroke-width="1" opacity="1"/><path d="M-2-3H2M-2-1H2" stroke="#aeb9c1" fill="none" stroke-width="0.8" opacity="1"/><circle cx="0" cy="2.5" r="1.5" stroke="#aeb9c1" fill="none" stroke-width="1" opacity="1"/><path d="M-2.5 4.5H2.5" stroke="#4f9480" fill="none" stroke-width="1" opacity="1"/></g><rect x="113.5" y="54" width="1.3" height="1.3" fill="#dfe5e9"/><g transform="translate(123.5,52) scale(0.88)"><path d="M-1-4.5H1M0-4.5V3M-2.5 3.5H2.5" stroke="#aeb9c1" fill="none" stroke-width="1" opacity="0.9"/><path d="M0 0L2 2" stroke="#4f9480" fill="none" stroke-width="0.8" opacity="1"/></g><rect x="131" y="54" width="1.3" height="1.3" fill="#dfe5e9"/><g transform="translate(141,52) scale(0.88)"><rect x="-4.5" y="-3" width="8" height="5" rx="0" stroke="none" fill="#aeb9c1" stroke-width="1" opacity="0.8"/><rect x="-3" y="-1.5" width="5" height="2" rx="0" stroke="none" fill="#233540" stroke-width="1" opacity="1"/><path d="M-1 3.5H3.5" stroke="#5a8a80" fill="none" stroke-width="0.8" opacity="1"/></g><rect x="148.5" y="54" width="1.3" height="1.3" fill="#dfe5e9"/><g transform="translate(161,52) scale(0.88)"><path d="M-4 3L-1 0L1.5 2.5L-1.5 5Z" stroke="#aeb9c1" fill="#aeb9c1" stroke-width="0.5" opacity="1"/><path d="M0-1L3.5-4.5" stroke="#e8edf0" fill="none" stroke-width="2" opacity="1"/></g><g transform="translate(175,52) scale(0.88)"><path d="M-4 3L-1 0L1.5 2.5L-1.5 5Z" stroke="#aeb9c1" fill="#aeb9c1" stroke-width="0.5" opacity="0.35"/><path d="M0-1L3.5-4.5" stroke="#e8edf0" fill="none" stroke-width="2" opacity="0.35"/></g><g transform="translate(190,52) scale(0.88)"><path d="M-2.5 2L3-3.5" stroke="#fff" fill="none" stroke-width="1.6" opacity="1"/><rect x="-4.5" y="3.3" width="8" height="1.6" rx="0" stroke="none" fill="#000" stroke-width="1" opacity="1"/></g><rect x="197.5" y="54" width="1.3" height="1.3" fill="#dfe5e9"/><g transform="translate(207,52) scale(0.88)"><rect x="-4" y="-2.5" width="8" height="1.8" rx="0" stroke="none" fill="#aeb9c1" stroke-width="1" opacity="1"/><rect x="-4" y="0.2" width="8" height="0.8" rx="0" stroke="none" fill="#aeb9c1" stroke-width="1" opacity="1"/><rect x="-4" y="1.8" width="8" height="0.5" rx="0" stroke="none" fill="#aeb9c1" stroke-width="1" opacity="1"/></g><rect x="214.5" y="54" width="1.3" height="1.3" fill="#dfe5e9"/><g transform="translate(224.5,52) scale(0.88)"><rect x="-4" y="-2.5" width="8" height="5" rx="0" stroke="none" fill="#aeb9c1" stroke-width="1" opacity="0.8"/><path d="M-4-.8H4M-4 .8H4" stroke="#233540" fill="none" stroke-width="0.5" opacity="1"/></g><rect x="232" y="54" width="1.3" height="1.3" fill="#dfe5e9"/><g transform="translate(242,52) scale(0.88)"><path d="M-3 1L0-2.5L3 1L0 3Z" stroke="#fff" fill="#fff" stroke-width="0.5" opacity="1"/><path d="M0-4.5V-2" stroke="#aeb9c1" fill="none" stroke-width="0.8" opacity="1"/><rect x="-4.5" y="3.3" width="8.5" height="1.6" rx="0" stroke="none" fill="#000" stroke-width="1" opacity="1"/></g><rect x="249.5" y="54" width="1.3" height="1.3" fill="#dfe5e9"/><g transform="translate(259,52) scale(0.88)"><rect x="-5.7" y="-5.8" width="11.4" height="11.4" rx="0" stroke="none" fill="#fdfdfd" stroke-width="1" opacity="1"/></g><rect x="266.5" y="54" width="1.3" height="1.3" fill="#dfe5e9"/><g transform="translate(279.5,52) scale(0.88)"><circle cx="0" cy="0" r="3.9" stroke="#2f8a4c" fill="#35a055" stroke-width="1" opacity="1"/><path d="M-2.5-1H2.5M-2.5 .8H2.5" stroke="#8fcfa0" fill="none" stroke-width="0.8" opacity="1"/><path d="M2.5 3L4 4.5" stroke="#1a2a35" fill="none" stroke-width="1" opacity="1"/></g><g transform="translate(328.5,52) scale(0.88)"><path d="M-2-4V3L-.3 1.5L1 4.5L2 4L.8 1H3Z" stroke="none" fill="#fff" stroke-width="1" opacity="1"/></g><g transform="translate(341.5,52) scale(0.88)"><text x="0" y="3" font-size="7.4" font-weight="bold" fill="#fff" text-anchor="middle" font-family="Liberation Sans">A</text></g><rect x="349" y="54" width="1.3" height="1.3" fill="#dfe5e9"/><g transform="translate(359.5,52) scale(0.88)"><text x="0" y="3.5" font-size="7.4" font-weight="bold" fill="#fff" text-anchor="middle" font-family="Liberation Sans">A</text><path d="M2.5-3L4-4.5" stroke="#3fa088" fill="none" stroke-width="1" opacity="1"/></g><rect x="367" y="54" width="1.3" height="1.3" fill="#dfe5e9"/><g transform="translate(377,52) scale(0.88)"><rect x="-4" y="-3" width="8" height="6.5" rx="0" stroke="#aeb9c1" fill="none" stroke-width="1" opacity="1"/><rect x="-2.5" y="-1" width="5" height="3" rx="0" stroke="none" fill="#aeb9c1" stroke-width="1" opacity="0.6"/></g><g transform="translate(393,52) scale(0.88)"><path d="M-3.5-3.5L3.5 3.5" stroke="#aeb9c1" fill="none" stroke-width="0.9" opacity="0.8"/></g><g transform="translate(405,52) scale(0.88)"><rect x="-4.5" y="-3" width="9" height="6" rx="1" stroke="#aeb9c1" fill="none" stroke-width="1.2" opacity="1"/><path d="M-3 0H3" stroke="#aeb9c1" fill="none" stroke-width="0.8" opacity="0.8"/></g><rect x="412.5" y="54" width="1.3" height="1.3" fill="#dfe5e9"/><g transform="translate(422.5,52) scale(0.88)"><circle cx="0" cy="0" r="3.3" stroke="#aeb9c1" fill="none" stroke-width="1" opacity="1"/></g><rect x="430" y="54" width="1.3" height="1.3" fill="#dfe5e9"/><g transform="translate(440,52) scale(0.88)"><path d="M-1.5-3.5A3.6 3.6 0 0 1-1.5 3.5" stroke="#aeb9c1" fill="none" stroke-width="1.2" opacity="1"/></g><rect x="447.5" y="54" width="1.3" height="1.3" fill="#dfe5e9"/><g transform="translate(458,52) scale(0.88)"><path d="M-1-2.5A3 3 0 0 1 1.5 1.5" stroke="#aeb9c1" fill="none" stroke-width="1.1" opacity="0.8"/></g><rect x="465.5" y="54" width="1.3" height="1.3" fill="#dfe5e9"/><g transform="translate(475.5,52) scale(0.88)"><path d="M-2.5-3.5A5 5 0 0 1 2.5 2" stroke="#aeb9c1" fill="none" stroke-width="1.1" opacity="0.85"/></g><rect x="483" y="54" width="1.3" height="1.3" fill="#dfe5e9"/><g transform="translate(493.5,52) scale(0.88)"><path d="M-3-3L0 0L3-3M-3 3.5L0 0L3.5 3.5" stroke="#aeb9c1" fill="none" stroke-width="0.9" opacity="1"/><circle cx="-3" cy="-3" r="1.2" stroke="#aeb9c1" fill="#aeb9c1" stroke-width="1" opacity="1"/><circle cx="3" cy="-3.5" r="1.2" stroke="#aeb9c1" fill="#aeb9c1" stroke-width="1" opacity="1"/><circle cx="-3" cy="3.5" r="1.2" stroke="#aeb9c1" fill="#aeb9c1" stroke-width="1" opacity="1"/><circle cx="3.5" cy="3.5" r="1.2" stroke="#aeb9c1" fill="#aeb9c1" stroke-width="1" opacity="1"/></g><g transform="translate(506,52) scale(0.88)"><ellipse cx="0" cy="0" rx="4.5" ry="3" stroke="#aeb9c1" fill="none" stroke-width="1.1"/><path d="M-3 0H3M0-3V3" stroke="#aeb9c1" fill="none" stroke-width="0.7" opacity="0.8"/></g><rect x="513.5" y="54" width="1.3" height="1.3" fill="#dfe5e9"/><g transform="translate(523.5,52) scale(0.88)"><circle cx="0" cy="0" r="3.3" stroke="#aeb9c1" fill="none" stroke-width="1" opacity="1"/></g><rect x="531" y="54" width="1.3" height="1.3" fill="#dfe5e9"/><g transform="translate(543.5,52) scale(0.88)"><rect x="-3.5" y="-3.5" width="7" height="7" rx="0" stroke="#aeb9c1" fill="none" stroke-width="1" opacity="1"/><path d="M-3 3L0-1L1.5 1L3-2.5V3Z" stroke="#aeb9c1" fill="#aeb9c1" stroke-width="0.3" opacity="0.8"/></g><g transform="translate(557.5,52) scale(0.88)"><rect x="-3.5" y="-4" width="7" height="7" rx="0" stroke="#aeb9c1" fill="none" stroke-width="1" opacity="1"/><path d="M-3 2.5L0-1.5L1.5 .5L3-3V2.5Z" stroke="#aeb9c1" fill="#aeb9c1" stroke-width="0.3" opacity="0.8"/><path d="M1 3L2 5" stroke="#aeb9c1" fill="none" stroke-width="0.8" opacity="1"/></g><g transform="translate(571,52) scale(0.88)"><ellipse cx="0" cy="0" rx="4.3" ry="2.8" stroke="#aeb9c1" fill="none" stroke-width="1.1"/></g><g transform="translate(586,52) scale(0.88)"><path d="M-4-3V3M4-3V3M-4-1H4M-4 1.5H4" stroke="#aeb9c1" fill="none" stroke-width="0.9" opacity="1"/></g><g transform="translate(600,52) scale(0.88)"><path d="M-4-3V3M4-3V3M-4-1H4M-4 1.5H4" stroke="#aeb9c1" fill="none" stroke-width="0.9" opacity="1"/><rect x="-2.5" y="-1" width="5" height="2.5" rx="0" stroke="none" fill="#aeb9c1" stroke-width="1" opacity="0.5"/></g><g transform="translate(612.5,52) scale(0.88)"><path d="M-3-3.5H2V2" stroke="#aeb9c1" fill="none" stroke-width="1.2" opacity="1"/><rect x="1" y="1.5" width="2" height="2" rx="0" stroke="none" fill="#fff" stroke-width="1" opacity="1"/></g></svg>
<div class="a" style="left:0;top:58px;width:800px;height:1px;background:#1b2c37"></div>
<div class="a" id="lside"></div>
<div class="a" style="left:0;top:58px;width:1.2px;height:380px;background:#1a303d"></div>
<div class="a" style="left:12.5px;top:58px;width:2.5px;height:380px;background:#25373f"></div>
<div class="t" style="left:9.8px;top:68px;transform:rotate(90deg);transform-origin:0 0;font-size:4.7px;color:#c5cdd3">Projekt-Explorer</div>
<div class="t" style="left:9.8px;top:114px;transform:rotate(90deg);transform-origin:0 0;font-size:4.7px;color:#c5cdd3">Eigenschaften</div>
<svg class="a" style="left:2.5px;top:60.5px" width="8" height="8" viewBox="0 0 8 8"><rect x="1.5" y="1" width="4" height="5" stroke="#c5cdd3" fill="none" stroke-width=".8"/><path d="M4.5 5L6.5 7" stroke="#c5cdd3" stroke-width=".9"/></svg>
<svg class="a" style="left:2.5px;top:106px" width="8" height="8" viewBox="0 0 8 8"><rect x="1.5" y="1" width="4" height="5" stroke="#c5cdd3" fill="none" stroke-width=".8"/><path d="M4.5 5L6.5 7" stroke="#c5cdd3" stroke-width=".9"/></svg>
<div class="a" style="left:15px;top:59px;width:640px;height:24px;background:#22343f"></div>
<div class="a" style="left:15px;top:59.7px;width:89px;height:14.6px;background:#10232f"></div>
<div class="a" style="left:26px;top:75px;width:498px;height:8px;background:#0e2231"></div>
<div class="a" style="left:17.5px;top:63.5px;width:5.5px;height:6.5px;background:#f5a623;border-radius:.5px"></div>
<div class="a" style="left:19px;top:66px;width:2.5px;height:2px;background:#e98f10"></div>
<div class="t" style="left:27px;top:63.5px;font-size:5.9px;color:#eef2f4;transform:scaleX(0.8131);transform-origin:0 0;font-weight:bold;letter-spacing:-.05px;">=A1+ST_Plan.0025.wsELD</div>
<svg class="a" style="left:93px;top:62px" width="8" height="8" viewBox="0 0 8 8"><path d="M2 2L6 6M6 2L2 6" stroke="#fff" stroke-width="1"/></svg>
<svg class="a" style="left:630px;top:61px" width="26" height="10" viewBox="630 61 26 10"><path d="M635.5 64H639.5L637.5 67.5Z" fill="#fff"/><path d="M647.5 63.5L651.5 67.5M651.5 63.5L647.5 67.5" stroke="#fff" stroke-width="1.1"/></svg>
<svg class="a" style="left:15px;top:75px" width="640" height="8" viewBox="15 75 640 8"><path d="M32 79V83" stroke="#b8c2c9" stroke-width=".7"/><path d="M92.72 79V83" stroke="#b8c2c9" stroke-width=".7"/><path d="M153.44 79V83" stroke="#b8c2c9" stroke-width=".7"/><path d="M214.16 79V83" stroke="#b8c2c9" stroke-width=".7"/><path d="M274.88 79V83" stroke="#b8c2c9" stroke-width=".7"/><path d="M335.6 79V83" stroke="#b8c2c9" stroke-width=".7"/><path d="M396.32 79V83" stroke="#b8c2c9" stroke-width=".7"/><path d="M457.04 79V83" stroke="#b8c2c9" stroke-width=".7"/><path d="M517.76 79V83" stroke="#b8c2c9" stroke-width=".7"/><text x="62.4" y="81.3" font-size="4.8" fill="#cfd6db" text-anchor="middle" font-family="Liberation Sans">1</text><text x="123.12" y="81.3" font-size="4.8" fill="#cfd6db" text-anchor="middle" font-family="Liberation Sans">2</text><text x="183.84" y="81.3" font-size="4.8" fill="#cfd6db" text-anchor="middle" font-family="Liberation Sans">3</text><text x="244.56" y="81.3" font-size="4.8" fill="#cfd6db" text-anchor="middle" font-family="Liberation Sans">4</text><text x="305.28" y="81.3" font-size="4.8" fill="#cfd6db" text-anchor="middle" font-family="Liberation Sans">5</text><text x="366" y="81.3" font-size="4.8" fill="#cfd6db" text-anchor="middle" font-family="Liberation Sans">6</text><text x="426.72" y="81.3" font-size="4.8" fill="#cfd6db" text-anchor="middle" font-family="Liberation Sans">7</text><text x="487.44" y="81.3" font-size="4.8" fill="#cfd6db" text-anchor="middle" font-family="Liberation Sans">8</text><path d="M275.3 77V83" stroke="#e8edf0" stroke-width=".8"/></svg>
<div class="a" id="canvas"></div>
<div class="a" style="left:652px;top:83px;width:3px;height:352px;background:#253741"></div>
<div class="a" style="left:15px;top:435px;width:640px;height:3px;background:#283b48"></div><div class="a" style="left:12.5px;top:435.2px;width:643px;height:1.3px;background:#12232e"></div>
<div class="a" style="left:655px;top:58px;width:3.3px;height:380px;background:#0a1f2e"></div>
<div class="a" style="left:656.5px;top:239px;width:1.5px;height:18px;background:#3a4b57"></div>
<div class="a" style="left:660px;top:59px;width:138px;height:29px;background:#24374a"></div>
<div class="a" style="left:660px;top:72px;width:138px;height:16px;background:#223645"></div>
<div class="a" style="left:797px;top:58px;width:3px;height:380px;background:#10222e"></div>
<svg class="a" style="left:659.5px;top:60.5px" width="10" height="10" viewBox="0 0 12 12"><path d="M5 1.5Q5.5 5 9 5.5Q5.5 6 5 9.5Q4.5 6 1 5.5Q4.5 5 5 1.5Z" fill="#f2c81e"/><circle cx="8.7" cy="8.3" r="1.1" fill="#f2c81e"/><circle cx="8.8" cy="2.5" r=".7" fill="#b99a20"/></svg>
<div class="t" style="left:673.2px;top:62.1px;font-size:5.3px;color:#dfe5e9;transform:scaleX(0.8826);transform-origin:0 0;">AI Copilot (beta)</div>
<svg class="a" style="left:765px;top:61px" width="34" height="10" viewBox="765 61 34 10"><path d="M768.5 64.5L770.7 66.7L773 64.5" stroke="#e8edf0" fill="none" stroke-width=".9"/><path d="M781.5 63V66M780 66H783.2M781.5 66V68.5" stroke="#c5cdd3" fill="none" stroke-width=".9"/><rect x="780.5" y="62.5" width="2" height="3" fill="#c5cdd3"/><path d="M790.5 63.5L794.5 67.5M794.5 63.5L790.5 67.5" stroke="#fff" stroke-width="1.1"/></svg>
<div class="a" style="left:747.5px;top:75.5px;width:42px;height:10px;background:#fdd614;border-radius:5px;border:.8px solid #3a3408"></div>
<div class="t" style="left:751.9px;top:76.9px;font-size:5.9px;color:#3b3405;transform:scaleX(0.8958);transform-origin:0 0;">Neues Thema</div>
<div class="a" style="left:658.3px;top:59px;width:1.7px;height:379px;background:#21343f"></div>
<div class="a" style="left:660px;top:88px;width:137px;height:189px;background:#071d2e;border-bottom:1px solid #1b2f40"></div>
<div class="a" style="left:696px;top:89.5px;width:94px;height:19px;border:1px solid #1c2f40;border-radius:2.5px;background:#071d2e"></div>
<div class="t" style="left:743.3px;top:92.5px;font-size:5.2px;color:#eef2f5;transform:scaleX(0.8912);transform-origin:0 0;">platziere den makro</div>
<div class="t" style="left:726.2px;top:98.2px;font-size:5.2px;color:#eef2f5;transform:scaleX(0.8927);transform-origin:0 0;">Motor_3pol_direkt_Kaltleiter</div>
<div class="a" style="left:667px;top:115px;width:74px;height:34.5px;border-radius:2.5px;background:#22343f"></div>
<div class="t" style="left:674px;top:119px;font-size:5.5px;color:#eef2f5;transform:scaleX(1.0050);transform-origin:0 0;">Der Makro</div>
<div class="t" style="left:674px;top:125.2px;font-size:5.5px;color:#eef2f5;transform:scaleX(0.9927);transform-origin:0 0;">"Motor_3pol_direkt_Kaltl</div>
<div class="t" style="left:674px;top:131.2px;font-size:5.5px;color:#eef2f5;transform:scaleX(0.9881);transform-origin:0 0;">eiter" wurde erfolgreich</div>
<div class="t" style="left:674px;top:137.5px;font-size:5.5px;color:#eef2f5;transform:scaleX(0.9429);transform-origin:0 0;">platziert.</div>
<div class="a" style="left:696px;top:153px;width:94px;height:14.5px;border:1px solid #1c2f40;border-radius:2.5px;background:#071d2e"></div>
<div class="t" style="left:741.6px;top:156.4px;font-size:5.2px;color:#eef2f5;transform:scaleX(0.8830);transform-origin:0 0;">aktiviere makro CPU</div>
<div class="a" style="left:667px;top:173px;width:74px;height:22px;border-radius:2.5px;background:#22343f"></div>
<div class="t" style="left:674px;top:177.3px;font-size:5.5px;color:#eef2f5;transform:scaleX(0.9860);transform-origin:0 0;">Das Makro "CPU" wurde</div>
<div class="t" style="left:674px;top:183.9px;font-size:5.5px;color:#eef2f5;transform:scaleX(0.9625);transform-origin:0 0;">erfolgreich aktiviert.</div>
<svg class="a" style="left:660px;top:88px" width="138" height="189" viewBox="660 88 138 189"><g transform="translate(743.5,141)" stroke="#3f5160" fill="none" stroke-width=".8"><path d="M0 1.5H1.3V5H0ZM1.3 2L2.7 0V1.5H4.5V4.5H1.3"/><path d="M6.5 .5H7.8V4H6.5ZM7.8 .7H11V3.2H9.3V5L7.8 3.2" transform="translate(3,.5)"/></g><g transform="translate(743.5,187)" stroke="#3f5160" fill="none" stroke-width=".8"><path d="M0 1.5H1.3V5H0ZM1.3 2L2.7 0V1.5H4.5V4.5H1.3"/><path d="M6.5 .5H7.8V4H6.5ZM7.8 .7H11V3.2H9.3V5L7.8 3.2" transform="translate(3,.5)"/></g><path d="M746.5 176A1.8 1.8 0 1 1 749.5 177.5" stroke="#3f5160" fill="none" stroke-width=".8"/></svg>
<div class="a" style="left:662px;top:248px;width:132px;height:14px;background:#233947;border-radius:1px"></div>
<div class="t" style="left:666.2px;top:251.2px;font-size:5.6px;color:#9aabb8;transform:scaleX(0.9217);transform-origin:0 0;font-style:italic;">Fragen Sie mich etwas...</div>
<svg class="a" style="left:781px;top:249px" width="12" height="12" viewBox="0 0 12 12"><circle cx="6" cy="6" r="5" fill="#fdd614"/><path d="M6 3.2L8.6 8H3.4Z" stroke="#4a4008" fill="none" stroke-width="1.1"/><path d="M4.3 6.7H7.7" stroke="#4a4008" stroke-width=".8"/></svg>
<div class="t" style="left:662.3px;top:266.1px;font-size:5.6px;color:#c2cad0;transform:scaleX(0.9272);transform-origin:0 0;font-style:italic;">Ich bin eine AI und kann Fehler machen. Ergebnisse über</div>
<div class="a" style="left:660px;top:277px;width:138px;height:3px;background:#0d2231"></div>
<div class="a" style="left:720px;top:278px;width:16px;height:1px;background:#5b6b76"></div>
<div class="a" style="left:660px;top:280px;width:138px;height:12px;background:#263a4b"></div>
<div class="t" style="left:662.6px;top:282.1px;font-size:5.3px;color:#eef2f5;transform:scaleX(0.8557);transform-origin:0 0;">Makro-Explorer</div>
<svg class="a" style="left:765px;top:281px" width="34" height="10" viewBox="765 281 34 10"><path d="M768.5 285L770.7 287.2L773 285" stroke="#e8edf0" fill="none" stroke-width=".9"/><path d="M781.5 283V286M780 286H783.2M781.5 286V288.5" stroke="#c5cdd3" fill="none" stroke-width=".9"/><rect x="780.5" y="282.5" width="2" height="3" fill="#c5cdd3"/><path d="M790.5 284L794.5 288M794.5 284L790.5 288" stroke="#fff" stroke-width="1.1"/></svg>
<div class="a" style="left:660px;top:292px;width:138px;height:146px;background:#243642"></div>
<div class="a" style="left:731px;top:294px;width:65px;height:11px;background:#0b2135"></div>
<svg class="a" style="left:660px;top:292px" width="80" height="15" viewBox="660 292 80 15"><path d="M665.6 299.2H669L667.3 301.8Z" fill="#fff"/><g stroke="#aeb9c1" fill="none" stroke-width=".9"><rect x="675.4" y="297.6" width="7.6" height="5.6" fill="#8e9aa3" stroke="#b8c2c9"/><path d="M676.5 300.3H682" stroke="#223540" stroke-width=".9"/><path d="M677.3 296.3V297.6M681 296.3V297.6"/><path d="M693.8 298.2A3 3 0 1 0 694.6 301.2"/><path d="M692.6 296.6H695.3V299.3Z" fill="#e8edf0" stroke="none"/><rect x="701.3" y="296.7" width="4.6" height="5" rx="1"/><rect x="703.6" y="298.6" width="4.8" height="5" rx="1" fill="#243642"/><path d="M705 301.2H707.3" /></g><path d="M712.5 295.5V305" stroke="#3b4c58" stroke-width=".8"/><rect x="733.8" y="296.5" width="6" height="6.8" fill="#f5a31f" rx=".5"/><rect x="736" y="298.7" width="1.5" height="2.5" fill="#fde3a8"/></svg>
<div class="t" style="left:716.6px;top:296.8px;font-size:5.5px;color:#eef2f5;transform:scaleX(0.7927);transform-origin:0 0;">Filter:</div>
<div class="t" style="left:744.7px;top:296.8px;font-size:5.3px;color:#eef2f5;transform:scaleX(0.8888);transform-origin:0 0;">Electrical Engineering ...</div>
<svg class="a" style="left:660px;top:306px" width="138" height="122" viewBox="660 306 138 122"><g stroke="#3a4b57" stroke-width=".5" fill="none"><path d="M673.3 316V355M681.3 358V424M689.5 366V422M697.5 391V413"/></g><rect x="664" y="311.3" width="3.4" height="3.4" fill="#e8edf0"/><path d="M664.7 313H666.7" stroke="#243642" stroke-width=".6"/><path d="M670.6 311.2H672.3L672.8 311.8H675.1V314.8H670.6Z" stroke="#dfe5e9" fill="none" stroke-width=".7"/><path d="M671.6 313.3H674.3" stroke="#dfe5e9" stroke-width=".5"/><rect x="678.3" y="318.2" width="6" height="6" fill="#f3b64a"/><rect x="679.8" y="320.2" width="1.2" height="2" fill="#fff1cf"/><rect x="681.8" y="320.2" width="1.2" height="2" fill="#fff1cf"/><rect x="678.3" y="326.5" width="6" height="6" fill="#f3b64a"/><rect x="679.8" y="328.5" width="1.2" height="2" fill="#fff1cf"/><rect x="681.8" y="328.5" width="1.2" height="2" fill="#fff1cf"/><rect x="671.5" y="336.3" width="3.4" height="3.4" fill="#e8edf0"/><path d="M672.2 338H674.2" stroke="#243642" stroke-width=".6"/><path d="M673.2 337V339" stroke="#243642" stroke-width=".6"/><rect x="678.1" y="336.4" width="6.5" height="2.6" fill="#7a2c2c"/><rect x="671.5" y="344.5" width="3.4" height="3.4" fill="#e8edf0"/><path d="M672.2 346.2H674.2" stroke="#243642" stroke-width=".6"/><path d="M673.2 345.2V347.2" stroke="#243642" stroke-width=".6"/><rect x="678.3" y="343" width="6" height="6.4" fill="#0a0f14"/><path d="M679.7 349.2V345.7A1.6 1.6 0 0 1 682.9 345.7V349.2" stroke="#fff" fill="none" stroke-width=".9"/><rect x="671.5" y="352.7" width="3.4" height="3.4" fill="#e8edf0"/><path d="M672.2 354.4H674.2" stroke="#243642" stroke-width=".6"/><rect x="678.3" y="351.4" width="6" height="6" fill="#f3b64a"/><rect x="679.8" y="353.4" width="1.2" height="2" fill="#fff1cf"/><rect x="681.8" y="353.4" width="1.2" height="2" fill="#fff1cf"/><rect x="679.8" y="361.3" width="3.4" height="3.4" fill="#e8edf0"/><path d="M680.5 363H682.5" stroke="#243642" stroke-width=".6"/><path d="M686.1 361.2H687.8L688.3 361.8H690.6V364.8H686.1Z" stroke="#dfe5e9" fill="none" stroke-width=".7"/><path d="M687.1 363.3H689.8" stroke="#dfe5e9" stroke-width=".5"/><rect x="687.8" y="369.5" width="3.4" height="3.4" fill="#e8edf0"/><path d="M688.5 371.2H690.5" stroke="#243642" stroke-width=".6"/><path d="M689.5 370.2V372.2" stroke="#243642" stroke-width=".6"/><path d="M694.3 369.4H696L696.5 370H698.8V373H694.3Z" stroke="#dfe5e9" fill="none" stroke-width=".7"/><path d="M695.3 371.5H698" stroke="#dfe5e9" stroke-width=".5"/><path d="M694.3 377.7H696L696.5 378.3H698.8V381.3H694.3Z" stroke="#dfe5e9" fill="none" stroke-width=".7"/><path d="M695.3 379.8H698" stroke="#dfe5e9" stroke-width=".5"/><rect x="687.8" y="386" width="3.4" height="3.4" fill="#e8edf0"/><path d="M688.5 387.7H690.5" stroke="#243642" stroke-width=".6"/><path d="M694.3 385.9H696L696.5 386.5H698.8V389.5H694.3Z" stroke="#dfe5e9" fill="none" stroke-width=".7"/><path d="M695.3 388H698" stroke="#dfe5e9" stroke-width=".5"/><path d="M702.3 394.4H704L704.5 395H706.8V398H702.3Z" stroke="#dfe5e9" fill="none" stroke-width=".7"/><path d="M703.3 396.5H706" stroke="#dfe5e9" stroke-width=".5"/><path d="M702.3 402.7H704L704.5 403.3H706.8V406.3H702.3Z" stroke="#dfe5e9" fill="none" stroke-width=".7"/><path d="M703.3 404.8H706" stroke="#dfe5e9" stroke-width=".5"/><path d="M702.3 411H704L704.5 411.6H706.8V414.6H702.3Z" stroke="#dfe5e9" fill="none" stroke-width=".7"/><path d="M703.3 413.1H706" stroke="#dfe5e9" stroke-width=".5"/><path d="M694.3 419.8H696L696.5 420.4H698.8V423.4H694.3Z" stroke="#dfe5e9" fill="none" stroke-width=".7"/><path d="M695.3 421.9H698" stroke="#dfe5e9" stroke-width=".5"/></svg>
<div class="t" style="left:678.6px;top:310px;font-size:5.3px;color:#eef2f5;transform:scaleX(0.8217);transform-origin:0 0;">Makro</div>
<div class="t" style="left:686.7px;top:318.2px;font-size:5.3px;color:#eef2f5;transform:scaleX(0.8211);transform-origin:0 0;">Einspeisung und Aussenleiter</div>
<div class="t" style="left:686.7px;top:326.5px;font-size:5.3px;color:#eef2f5;transform:scaleX(0.8297);transform-origin:0 0;">Motorsteuerung</div>
<div class="t" style="left:686.7px;top:335px;font-size:5.3px;color:#eef2f5;transform:scaleX(0.8246);transform-origin:0 0;">ProjectWizard</div>
<div class="a" style="left:685.5px;top:342.7px;width:27px;height:7px;background:#0b2135"></div>
<div class="t" style="left:686.7px;top:343.2px;font-size:5.3px;color:#eef2f5;transform:scaleX(0.8279);transform-origin:0 0;">RAL-RG678</div>
<div class="t" style="left:686.7px;top:351.4px;font-size:5.3px;color:#eef2f5;transform:scaleX(0.8238);transform-origin:0 0;">Verteiler-Makros A4</div>
<div class="t" style="left:694.5px;top:360px;font-size:5.3px;color:#eef2f5;transform:scaleX(0.8245);transform-origin:0 0;">Abgang 1-polig</div>
<div class="t" style="left:702.5px;top:368.2px;font-size:5.3px;color:#eef2f5;transform:scaleX(0.8053);transform-origin:0 0;">Ausschalter</div>
<div class="t" style="left:702.5px;top:376.5px;font-size:5.3px;color:#eef2f5;transform:scaleX(0.8240);transform-origin:0 0;">Lasttrennschalter</div>
<div class="t" style="left:702.5px;top:384.7px;font-size:5.3px;color:#eef2f5;transform:scaleX(0.8328);transform-origin:0 0;">Leitungsschutzschalter</div>
<div class="t" style="left:710.3px;top:393.2px;font-size:5.3px;color:#eef2f5;transform:scaleX(0.7633);transform-origin:0 0;">L1</div>
<div class="t" style="left:710.3px;top:401.5px;font-size:5.3px;color:#eef2f5;transform:scaleX(0.7633);transform-origin:0 0;">L2</div>
<div class="t" style="left:710.3px;top:409.8px;font-size:5.3px;color:#eef2f5;transform:scaleX(0.7633);transform-origin:0 0;">L3</div>
<div class="t" style="left:702.5px;top:418.6px;font-size:5.3px;color:#eef2f5;transform:scaleX(0.8264);transform-origin:0 0;">LS fuer 2pol RCD Sammelschiene</div>
<div class="a" style="left:789px;top:308px;width:7px;height:119px;background:#eef2f5"></div>
<div class="a" style="left:791.5px;top:316px;width:2px;height:104px;background:#b9c0c6;border-radius:1px"></div>
<div class="a" style="left:658.3px;top:428.5px;width:139px;height:9.5px;background:#2a3d49"></div>
<div class="a" style="left:703px;top:428.5px;width:43px;height:8.5px;background:#13273a"></div>
<div class="a" style="left:746px;top:428.5px;width:1px;height:9px;background:#1d2f3b"></div><div class="a" style="left:702px;top:428.5px;width:1px;height:9px;background:#1d2f3b"></div>
<svg class="a" style="left:660px;top:428px" width="138" height="10" viewBox="660 428 138 10"><g stroke="#aab5bd" fill="none" stroke-width=".7"><path d="M662 431V436M662 433H664.5M662 435.5H664.5"/></g><rect x="706.3" y="431" width="4.4" height="3.6" stroke="#dfe5e9" fill="none" stroke-width=".7"/><path d="M706.3 432.8H710.7M708.5 431V434.6M706.3 435.8H709" stroke="#dfe5e9" stroke-width=".6"/><g stroke="#aab5bd" fill="none" stroke-width=".7"><path d="M751 431V436M751 433H753.5M751 435.5H753.5"/></g></svg>
<div class="t" style="left:666.8px;top:429.2px;font-size:5.4px;color:#e6ebef;transform:scaleX(0.8268);transform-origin:0 0;">Symbol-Explorer</div>
<div class="t" style="left:712.1px;top:429.2px;font-size:5.4px;color:#ffffff;transform:scaleX(0.8588);transform-origin:0 0;">Makro-Explorer</div>
<div class="t" style="left:756.1px;top:429.2px;font-size:5.4px;color:#e6ebef;transform:scaleX(0.8562);transform-origin:0 0;">Material-Explorer</div>
<div class="a" id="status"></div>
<div class="a" style="left:0;top:449px;width:800px;height:1px;background:#15262f"></div>
<div class="a" style="left:44px;top:440px;width:1px;height:8px;background:#15262f"></div>
<div class="t" style="left:3.5px;top:440.5px;font-size:5.6px;color:#f0f3f5">Fertig</div>
<div class="t" style="left:667.3px;top:439.8px;font-size:5.8px;color:#f4f7f9;transform:scaleX(0.8224);transform-origin:0 0;">101%</div>
<div class="t" style="left:709px;top:439.8px;font-size:5.8px;color:#f4f7f9;transform:scaleX(0.9217);transform-origin:0 0;">312,5/90 mm</div>
<div class="t" style="left:751px;top:439.8px;font-size:5.8px;color:#f4f7f9;transform:scaleX(0.8429);transform-origin:0 0;">DIN A4&nbsp; 1:1</div>
<svg class="a" style="left:15px;top:83px" width="637" height="352" viewBox="15 83 637 352"><path d="M33 135H517" stroke="#f0f0f0" stroke-width="0.6" fill="none" /><path d="M33 160H517" stroke="#f0f0f0" stroke-width="0.6" fill="none" /><path d="M33 185H517" stroke="#f0f0f0" stroke-width="0.6" fill="none" /><path d="M33 210H517" stroke="#f0f0f0" stroke-width="0.6" fill="none" /><path d="M33 260H517" stroke="#f0f0f0" stroke-width="0.6" fill="none" /><path d="M33 285H517" stroke="#f0f0f0" stroke-width="0.6" fill="none" /><path d="M33 310H517" stroke="#f0f0f0" stroke-width="0.6" fill="none" /><path d="M33 335H517" stroke="#f0f0f0" stroke-width="0.6" fill="none" /><path d="M33 360H517" stroke="#f0f0f0" stroke-width="0.6" fill="none" /><path d="M33 385H517" stroke="#f0f0f0" stroke-width="0.6" fill="none" /><path d="M15 235.6H652" stroke="#edd8d6" stroke-width="0.9" fill="none" /><path d="M549.7 83V435" stroke="#edd8d6" stroke-width="0.9" fill="none" /><path d="M275.3 83V97.5" stroke="#333" stroke-width="0.8" fill="none" /><path d="M32 89.7H518.2V432.5H32Z" stroke="#858585" stroke-width="1" fill="none" /><path d="M32 97.5H518" stroke="#858585" stroke-width="0.9" fill="none" /><path d="M92.72 89.7V97.5" stroke="#858585" stroke-width="0.9" fill="none" /><path d="M153.44 89.7V97.5" stroke="#858585" stroke-width="0.9" fill="none" /><path d="M214.16 89.7V97.5" stroke="#858585" stroke-width="0.9" fill="none" /><path d="M274.88 89.7V97.5" stroke="#858585" stroke-width="0.9" fill="none" /><path d="M335.6 89.7V97.5" stroke="#858585" stroke-width="0.9" fill="none" /><path d="M396.32 89.7V97.5" stroke="#858585" stroke-width="0.9" fill="none" /><path d="M457.04 89.7V97.5" stroke="#858585" stroke-width="0.9" fill="none" /><g transform="translate(62.4,95.3) scale(0.1)"><text font-size="38" fill="#444" text-anchor="middle" font-family="Liberation Sans" >1</text></g><g transform="translate(123.12,95.3) scale(0.1)"><text font-size="38" fill="#444" text-anchor="middle" font-family="Liberation Sans" >2</text></g><g transform="translate(183.84,95.3) scale(0.1)"><text font-size="38" fill="#444" text-anchor="middle" font-family="Liberation Sans" >3</text></g><g transform="translate(244.56,95.3) scale(0.1)"><text font-size="38" fill="#444" text-anchor="middle" font-family="Liberation Sans" >4</text></g><g transform="translate(305.28,95.3) scale(0.1)"><text font-size="38" fill="#444" text-anchor="middle" font-family="Liberation Sans" >5</text></g><g transform="translate(366,95.3) scale(0.1)"><text font-size="38" fill="#444" text-anchor="middle" font-family="Liberation Sans" >6</text></g><g transform="translate(426.72,95.3) scale(0.1)"><text font-size="38" fill="#444" text-anchor="middle" font-family="Liberation Sans" >7</text></g><g transform="translate(487.44,95.3) scale(0.1)"><text font-size="38" fill="#444" text-anchor="middle" font-family="Liberation Sans" >8</text></g><path d="M66.5 106H486" stroke="#8c8c8c" stroke-width="1.25" fill="none" /><g transform="translate(68.3,105.3) scale(0.1)"><text font-size="36" fill="#000" stroke="#000" stroke-width="1" font-family="Liberation Sans" textLength="38" lengthAdjust="spacingAndGlyphs">L1</text></g><g transform="translate(480.7,105.3) scale(0.1)"><text font-size="36" fill="#000" stroke="#000" stroke-width="1" font-family="Liberation Sans" textLength="38" lengthAdjust="spacingAndGlyphs">L1</text></g><path d="M484.3 104.7L487.3 106L484.3 107.3Z" fill="#333"/><path d="M68.3 105.1L66 106.4L68.3 106.9Z" fill="#444"/><path d="M66.5 110.1H486" stroke="#8c8c8c" stroke-width="1.25" fill="none" /><g transform="translate(68.3,109.4) scale(0.1)"><text font-size="36" fill="#000" stroke="#000" stroke-width="1" font-family="Liberation Sans" textLength="38" lengthAdjust="spacingAndGlyphs">L2</text></g><g transform="translate(480.7,109.4) scale(0.1)"><text font-size="36" fill="#000" stroke="#000" stroke-width="1" font-family="Liberation Sans" textLength="38" lengthAdjust="spacingAndGlyphs">L2</text></g><path d="M484.3 108.8L487.3 110.1L484.3 111.4Z" fill="#333"/><path d="M68.3 109.2L66 110.5L68.3 111Z" fill="#444"/><path d="M66.5 114.2H486" stroke="#666" stroke-width="0.9" fill="none" /><g transform="translate(68.3,113.5) scale(0.1)"><text font-size="36" fill="#000" stroke="#000" stroke-width="1" font-family="Liberation Sans" textLength="38" lengthAdjust="spacingAndGlyphs">L3</text></g><g transform="translate(480.7,113.5) scale(0.1)"><text font-size="36" fill="#000" stroke="#000" stroke-width="1" font-family="Liberation Sans" textLength="38" lengthAdjust="spacingAndGlyphs">L3</text></g><path d="M484.3 112.9L487.3 114.2L484.3 115.5Z" fill="#333"/><path d="M68.3 113.3L66 114.6L68.3 115.1Z" fill="#444"/><path d="M66.5 122.5H486" stroke="#555" stroke-width="0.85" fill="none" /><g transform="translate(68.3,121.8) scale(0.1)"><text font-size="36" fill="#000" stroke="#000" stroke-width="1" font-family="Liberation Sans" textLength="57" lengthAdjust="spacingAndGlyphs">L24</text></g><g transform="translate(478.8,121.8) scale(0.1)"><text font-size="36" fill="#000" stroke="#000" stroke-width="1" font-family="Liberation Sans" textLength="57" lengthAdjust="spacingAndGlyphs">L24</text></g><path d="M484.3 121.2L487.3 122.5L484.3 123.8Z" fill="#333"/><path d="M68.3 121.6L66 122.9L68.3 123.4Z" fill="#444"/><path d="M109.8 106V147.5M109.8 156.5V188.5M109.8 196V363.5" stroke="#8c8c8c" stroke-width="1.25" fill="none" /><path d="M118.2 110.1V147.5M118.2 156.5V188.5M118.2 196V361.5" stroke="#8c8c8c" stroke-width="1.25" fill="none" /><path d="M126.6 114.2V147.5M126.6 156.5V188.5M126.6 196V363.5" stroke="#666" stroke-width="0.9" fill="none" /><path d="M108.8 107.8L109.8 106L110.8 107.8M117.2 111.9L118.2 110.1L119.2 111.9M125.6 116L126.6 114.2L127.6 116" stroke="#444" stroke-width="0.6" fill="none" /><path d="M105.3 147.5H131V156.5H105.3ZM113.8 147.5V156.5M122.3 147.5V156.5" stroke="#555" stroke-width="0.9" fill="none" /><path d="M106.5 152H112.5M115 152H121M123.5 152H129.5" stroke="#999" stroke-width="0.6" fill="none" /><path d="M107 149.5h5v5h-5zM115.5 149.5h5v5h-5zM124 149.5h5v5h-5z" stroke="#aaa" stroke-width="0.5" fill="none" /><rect x="97.2" y="139.3" width="4.3" height="4.3" stroke="#666" fill="none" stroke-width=".7"/><path d="M97.2 141.45H101.5M99.35 139.3V143.6" stroke="#777" stroke-width="0.5" fill="none" /><path d="M102.5 141.4H142.5" stroke="#666" stroke-width="0.8" fill="none" stroke-dasharray="1.8 1.6"/><path d="M99.5 146V154" stroke="#555" stroke-width="0.8" fill="none" stroke-dasharray="1.5 1.8"/><path d="M99.5 150H104M99.5 153.5H104" stroke="#555" stroke-width="0.7" fill="none" stroke-dasharray="1.5 1.2"/><g transform="translate(84,146.3) scale(0.1)"><text font-size="59" fill="#000" stroke="#000" stroke-width="1" font-family="Liberation Sans" textLength="85" lengthAdjust="spacingAndGlyphs">-F8</text></g><g transform="translate(92.3,141) scale(0.1)"><text font-size="30" fill="#222" text-anchor="start" font-family="Liberation Sans" >+</text></g><g transform="translate(107.8,136.8) rotate(-90) scale(0.1)"><text font-size="22" fill="#e59aa4" font-weight="bold" text-anchor="middle" font-family="Liberation Mono">1/L</text></g><g transform="translate(107.8,161.5) rotate(-90) scale(0.1)"><text font-size="22" fill="#e59aa4" font-weight="bold" text-anchor="middle" font-family="Liberation Mono">2/T</text></g><g transform="translate(116.3,136.8) rotate(-90) scale(0.1)"><text font-size="22" fill="#e59aa4" font-weight="bold" text-anchor="middle" font-family="Liberation Mono">1/L</text></g><g transform="translate(116.3,161.5) rotate(-90) scale(0.1)"><text font-size="22" fill="#e59aa4" font-weight="bold" text-anchor="middle" font-family="Liberation Mono">2/T</text></g><g transform="translate(124.8,136.8) rotate(-90) scale(0.1)"><text font-size="22" fill="#e59aa4" font-weight="bold" text-anchor="middle" font-family="Liberation Mono">1/L</text></g><g transform="translate(124.8,161.5) rotate(-90) scale(0.1)"><text font-size="22" fill="#e59aa4" font-weight="bold" text-anchor="middle" font-family="Liberation Mono">2/T</text></g><g transform="translate(143.3,148) rotate(-90) scale(.125)"><text font-size="28" fill="#dc4a60" stroke="#dc4a60" stroke-width=".6" font-family="Liberation Mono" font-weight="bold" textLength="116" lengthAdjust="spacingAndGlyphs">13 21</text></g><g transform="translate(143.6,160.8) rotate(-90) scale(.125)"><text font-size="27" fill="#666" stroke="#666" stroke-width=".8" font-family="Liberation Mono" font-style="italic" textLength="80" lengthAdjust="spacingAndGlyphs">/25.7</text></g><g transform="translate(93.5,191.2) scale(0.1)"><text font-size="59" fill="#000" stroke="#000" stroke-width="1" font-family="Liberation Sans" textLength="113" lengthAdjust="spacingAndGlyphs">-Q53</text></g><g transform="translate(95.5,197.6) scale(0.1)"><text font-size="33" fill="#888" text-anchor="start" font-family="Liberation Mono" font-style="italic" textLength="95">/25.3</text></g><path d="M109.8 196L107.7 189.8M118.2 196L116.1 189.8M126.6 196L124.5 189.8" stroke="#555" stroke-width="0.75" fill="none" /><path d="M105 193H124.5" stroke="#555" stroke-width="0.6" fill="none" stroke-dasharray="1.3 1.3"/><g transform="translate(108.3,185.8) rotate(-90) scale(0.1)"><text font-size="24" fill="#dc5068" font-weight="bold" text-anchor="middle" font-family="Liberation Mono">1</text></g><g transform="translate(108.3,198.5) rotate(-90) scale(0.1)"><text font-size="24" fill="#dc5068" font-weight="bold" text-anchor="middle" font-family="Liberation Mono">2</text></g><g transform="translate(116.7,185.8) rotate(-90) scale(0.1)"><text font-size="24" fill="#dc5068" font-weight="bold" text-anchor="middle" font-family="Liberation Mono">1</text></g><g transform="translate(116.7,198.5) rotate(-90) scale(0.1)"><text font-size="24" fill="#dc5068" font-weight="bold" text-anchor="middle" font-family="Liberation Mono">2</text></g><g transform="translate(125.1,185.8) rotate(-90) scale(0.1)"><text font-size="24" fill="#dc5068" font-weight="bold" text-anchor="middle" font-family="Liberation Mono">1</text></g><g transform="translate(125.1,198.5) rotate(-90) scale(0.1)"><text font-size="24" fill="#dc5068" font-weight="bold" text-anchor="middle" font-family="Liberation Mono">2</text></g><path d="M172.8 122.6V269.3M172.8 273.5V290.3" stroke="#555" stroke-width="0.65" fill="none" /><path d="M172 124L172.8 122.6L173.6 124" stroke="#555" stroke-width="0.5" fill="none" /><rect x="160.4" y="269.3" width="33" height="4.2" stroke="#555" fill="#fff" stroke-width=".9"/><rect x="162" y="270" width="5.5" height="2.8" stroke="#5f7a66" fill="#e4ece4" stroke-width=".5"/><g transform="translate(150,270.3) scale(0.1)"><text font-size="30" fill="#000" stroke="#000" stroke-width="1" font-family="Liberation Sans" textLength="90" lengthAdjust="spacingAndGlyphs">-K302</text></g><path d="M193.5 271.4H222.5" stroke="#555" stroke-width="0.8" fill="none" stroke-dasharray="1.8 1.6"/><path d="M181.2 273.5V386.6M189.3 273.5V390.8" stroke="#555" stroke-width="0.65" fill="none" /><g transform="translate(171.3,263) rotate(-90) scale(0.1)"><text font-size="28" fill="#dc5068" font-weight="bold" text-anchor="middle" font-family="Liberation Mono">A1/L+</text></g><g transform="translate(171.3,281.5) rotate(-90) scale(0.1)"><text font-size="28" fill="#dc5068" font-weight="bold" text-anchor="middle" font-family="Liberation Mono">A2/N</text></g><g transform="translate(179.8,278) rotate(-90) scale(0.1)"><text font-size="24" fill="#dc5068" font-weight="bold" text-anchor="middle" font-family="Liberation Mono">T1</text></g><g transform="translate(187.9,278) rotate(-90) scale(0.1)"><text font-size="24" fill="#dc5068" font-weight="bold" text-anchor="middle" font-family="Liberation Mono">T2</text></g><g transform="translate(207,267.6) scale(0.1)"><text font-size="33" fill="#d8304a" text-anchor="start" font-family="Liberation Mono" font-weight="bold" stroke="#d8304a" stroke-width="1.5" textLength="170" lengthAdjust="spacingAndGlyphs">13 21 31 43</text></g><path d="M213 271.4V273L214.3 277V279M222 271.4V273L223.3 277V279" stroke="#d03030" stroke-width="0.7" fill="none" /><g transform="translate(215,289.5) rotate(-90)"><text font-size="2.8" fill="#666" font-family="Liberation Mono" font-style="italic">/25.3</text></g><g transform="translate(223.5,289.5) rotate(-90)"><text font-size="2.8" fill="#666" font-family="Liberation Mono" font-style="italic">/25.7</text></g><path d="M66.5 290.2H486" stroke="#666" stroke-width="0.9" fill="none" /><g transform="translate(68.3,289.6) scale(0.1)"><text font-size="32" fill="#000" stroke="#000" stroke-width="1" font-family="Liberation Sans" textLength="51" lengthAdjust="spacingAndGlyphs">24N</text></g><g transform="translate(479.4,289.6) scale(0.1)"><text font-size="32" fill="#000" stroke="#000" stroke-width="1" font-family="Liberation Sans" textLength="51" lengthAdjust="spacingAndGlyphs">24N</text></g><path d="M484.3 288.9L487.3 290.2L484.3 291.5Z" fill="#333"/><path d="M68.3 289.3L66 290.6L68.3 291.1Z" fill="#444"/><path d="M66.5 294.5H486" stroke="#666" stroke-width="0.9" fill="none" /><g transform="translate(68.3,293.9) scale(0.1)"><text font-size="32" fill="#000" stroke="#000" stroke-width="1" font-family="Liberation Sans" textLength="17" lengthAdjust="spacingAndGlyphs">N</text></g><g transform="translate(482.8,293.9) scale(0.1)"><text font-size="32" fill="#000" stroke="#000" stroke-width="1" font-family="Liberation Sans" textLength="17" lengthAdjust="spacingAndGlyphs">N</text></g><path d="M484.3 293.2L487.3 294.5L484.3 295.8Z" fill="#333"/><path d="M68.3 293.6L66 294.9L68.3 295.4Z" fill="#444"/><path d="M66.5 298.5H486" stroke="#8a8a8a" stroke-width="0.9" fill="none" /><g transform="translate(68.3,297.9) scale(0.1)"><text font-size="32" fill="#000" stroke="#000" stroke-width="1" font-family="Liberation Sans" textLength="34" lengthAdjust="spacingAndGlyphs">PE</text></g><g transform="translate(481.1,297.9) scale(0.1)"><text font-size="32" fill="#000" stroke="#000" stroke-width="1" font-family="Liberation Sans" textLength="34" lengthAdjust="spacingAndGlyphs">PE</text></g><path d="M484.3 297.2L487.3 298.5L484.3 299.8Z" fill="#333"/><path d="M68.3 297.6L66 298.9L68.3 299.4Z" fill="#444"/><g transform="translate(96.8,306.1) scale(0.1)"><text font-size="58" fill="#000" stroke="#000" stroke-width="1" font-family="Liberation Sans" textLength="110" lengthAdjust="spacingAndGlyphs">-X17</text></g><g transform="translate(167.5,306.1) scale(0.1)"><text font-size="58" fill="#000" stroke="#000" stroke-width="1" font-family="Liberation Sans" textLength="110" lengthAdjust="spacingAndGlyphs">-X18</text></g><circle cx="109.8" cy="306.9" r="1.4" stroke="#555" fill="#fff" stroke-width=".6"/><circle cx="118.2" cy="306.9" r="1.4" stroke="#555" fill="#fff" stroke-width=".6"/><circle cx="126.6" cy="306.9" r="1.4" stroke="#555" fill="#fff" stroke-width=".6"/><circle cx="135.2" cy="306.9" r="1.4" stroke="#555" fill="#fff" stroke-width=".6"/><circle cx="181.2" cy="306.9" r="1.4" stroke="#555" fill="#fff" stroke-width=".6"/><circle cx="189.3" cy="306.9" r="1.4" stroke="#555" fill="#fff" stroke-width=".6"/><g transform="translate(108.3,311.5) rotate(-90) scale(0.1)"><text font-size="24" fill="#e06a7a" font-weight="bold" text-anchor="middle" font-family="Liberation Mono">1</text></g><g transform="translate(116.7,311.5) rotate(-90) scale(0.1)"><text font-size="24" fill="#e06a7a" font-weight="bold" text-anchor="middle" font-family="Liberation Mono">2</text></g><g transform="translate(125.1,311.5) rotate(-90) scale(0.1)"><text font-size="24" fill="#e06a7a" font-weight="bold" text-anchor="middle" font-family="Liberation Mono">3</text></g><g transform="translate(179.7,311.5) rotate(-90) scale(0.1)"><text font-size="24" fill="#e06a7a" font-weight="bold" text-anchor="middle" font-family="Liberation Mono">1</text></g><g transform="translate(187.8,311.5) rotate(-90) scale(0.1)"><text font-size="24" fill="#e06a7a" font-weight="bold" text-anchor="middle" font-family="Liberation Mono">2</text></g><g transform="translate(133.6,310.5) rotate(-90) scale(0.1)"><text font-size="30" fill="#dc5068" font-weight="bold" text-anchor="middle" font-family="Liberation Mono">PE</text></g><path d="M135.2 298.7V305.8M135.2 308.2V369.6H127" stroke="#555" stroke-width="0.65" fill="none" /><path d="M125.8 369.6L128 368.3V370.9Z" fill="#222"/><circle cx="118.2" cy="369.2" r="7.6" stroke="#555" fill="#fff" stroke-width=".9"/><g transform="translate(118.2,366.5) scale(0.1)"><text font-size="42" fill="#333" text-anchor="middle" font-family="Liberation Sans" font-weight="bold">M</text></g><g transform="translate(118.2,372) scale(0.1)"><text font-size="36" fill="#333" text-anchor="middle" font-family="Liberation Sans" >3~</text></g><path d="M112 373.7H124.4" stroke="#555" stroke-width="0.6" fill="none" /><path d="M114.5 367V371H121" stroke="#555" stroke-width="0.5" fill="none" /><path d="M109.8 373.8V390.8H189.3M126.6 374V386.6H181.2" stroke="#555" stroke-width="0.65" fill="none" /><g transform="translate(96.5,368) scale(0.1)"><text font-size="44" fill="#111" text-anchor="start" font-family="Liberation Sans" font-style="italic" font-weight="bold" stroke="#111" stroke-width="1">-M7</text></g><g transform="translate(92.5,374.8) scale(0.1)"><text font-size="34" fill="#222" text-anchor="start" font-family="Liberation Mono" font-style="italic" font-weight="bold">Motor</text></g><g transform="translate(108.3,358.5) rotate(-90) scale(0.1)"><text font-size="24" fill="#dc5068" font-weight="bold" text-anchor="middle" font-family="Liberation Mono">U1</text></g><g transform="translate(116.7,358.5) rotate(-90) scale(0.1)"><text font-size="24" fill="#dc5068" font-weight="bold" text-anchor="middle" font-family="Liberation Mono">U1</text></g><g transform="translate(125.1,358.5) rotate(-90) scale(0.1)"><text font-size="24" fill="#dc5068" font-weight="bold" text-anchor="middle" font-family="Liberation Mono">U1</text></g><g transform="translate(133.8,357.5) rotate(-90) scale(0.1)"><text font-size="30" fill="#dc5068" font-weight="bold" text-anchor="middle" font-family="Liberation Mono">PE</text></g><g transform="translate(108.3,380) rotate(-90) scale(0.1)"><text font-size="24" fill="#dc5068" font-weight="bold" text-anchor="middle" font-family="Liberation Mono">T1</text></g><g transform="translate(125.1,380) rotate(-90) scale(0.1)"><text font-size="24" fill="#dc5068" font-weight="bold" text-anchor="middle" font-family="Liberation Mono">T2</text></g><g transform="translate(295.2,131.4) scale(0.1)"><text font-size="59" fill="#000" stroke="#000" stroke-width="1" font-family="Liberation Sans" textLength="170" lengthAdjust="spacingAndGlyphs">-K_DO0</text></g><rect x="273.3" y="135" width="59" height="38" rx="2" stroke="#555" fill="none" stroke-width=".7"/><path d="M273.3 147.5H332.3M273.3 160.5H332.3" stroke="#555" stroke-width="0.65" fill="none" /><g transform="translate(302.8,144) scale(0.1)"><text font-size="43" fill="#222" text-anchor="middle" font-family="Liberation Mono" textLength="340" lengthAdjust="spacingAndGlyphs" font-weight="bold">Digitaler Ausgang</text></g><g transform="translate(302.8,150.7) scale(0.1)"><text font-size="43" fill="#222" text-anchor="middle" font-family="Liberation Mono" textLength="260" lengthAdjust="spacingAndGlyphs" font-weight="bold">Motor EIN/AUS</text></g><circle cx="302.5" cy="166.6" r="1.2" stroke="#555" fill="#fff" stroke-width=".7"/><g transform="translate(301,176.5) rotate(-90) scale(0.1)"><text font-size="24" fill="#dc5068" font-weight="bold" text-anchor="middle" font-family="Liberation Mono">1</text></g><path d="M302.5 167.8V228.7M302.5 235.5V269.2M302.5 273.8V290.3" stroke="#555" stroke-width="0.65" fill="none" /><g transform="translate(275.3,232.8) scale(0.1)"><text font-size="59" fill="#000" stroke="#000" stroke-width="1" font-family="Liberation Sans" textLength="137" lengthAdjust="spacingAndGlyphs">-K302</text></g><g transform="translate(279.5,238.8) scale(0.1)"><text font-size="33" fill="#888" text-anchor="start" font-family="Liberation Mono" font-style="italic" textLength="95">/25.3</text></g><path d="M302.5 235.5L300.6 231H294.6V229" stroke="#555" stroke-width="0.75" fill="none" /><g transform="translate(293.2,227) rotate(-90) scale(0.1)"><text font-size="27" fill="#dc5068" font-weight="bold" text-anchor="middle" font-family="Liberation Mono">14</text></g><g transform="translate(300.6,227) rotate(-90) scale(0.1)"><text font-size="27" fill="#dc5068" font-weight="bold" text-anchor="middle" font-family="Liberation Mono">11</text></g><g transform="translate(300.6,239) rotate(-90) scale(0.1)"><text font-size="27" fill="#dc5068" font-weight="bold" text-anchor="middle" font-family="Liberation Mono">12</text></g><g transform="translate(286,270.8) scale(0.1)"><text font-size="59" fill="#000" stroke="#000" stroke-width="1" font-family="Liberation Sans" textLength="110" lengthAdjust="spacingAndGlyphs">-Q53</text></g><rect x="298.4" y="269.3" width="8.6" height="4.5" stroke="#666" fill="#fff" stroke-width=".8"/><g transform="translate(300.6,265) rotate(-90) scale(0.1)"><text font-size="27" fill="#dc5068" font-weight="bold" text-anchor="middle" font-family="Liberation Mono">A1</text></g><g transform="translate(300.6,277.2) rotate(-90) scale(0.1)"><text font-size="27" fill="#dc5068" font-weight="bold" text-anchor="middle" font-family="Liberation Mono">A2</text></g><path d="M361.5 122.6V189M361.5 196.5V224.2M420.6 122.6V163.8M420.6 169.5V189M420.6 196.5V224.2" stroke="#555" stroke-width="0.65" fill="none" /><path d="M360.7 124L361.5 122.6L362.3 124M419.8 124L420.6 122.6L421.4 124" stroke="#555" stroke-width="0.5" fill="none" /><path d="M361.5 196.5L359.4 190.3M420.6 196.5L418.5 190.3" stroke="#555" stroke-width="0.75" fill="none" /><path d="M420.6 169.5L418.3 164.4H411.2V162.2" stroke="#555" stroke-width="0.75" fill="none" /><g transform="translate(345,190.3) scale(0.1)"><text font-size="59" fill="#000" stroke="#000" stroke-width="1" font-family="Liberation Sans" textLength="112" lengthAdjust="spacingAndGlyphs">-Q53</text></g><g transform="translate(346.5,197) scale(0.1)"><text font-size="33" fill="#888" text-anchor="start" font-family="Liberation Mono" font-style="italic" textLength="95">/25.3</text></g><g transform="translate(406.7,190.3) scale(0.1)"><text font-size="59" fill="#000" stroke="#000" stroke-width="1" font-family="Liberation Sans" textLength="85" lengthAdjust="spacingAndGlyphs">-F8</text></g><g transform="translate(405,197) scale(0.1)"><text font-size="33" fill="#888" text-anchor="start" font-family="Liberation Mono" font-style="italic" textLength="95">/25.2</text></g><g transform="translate(392.5,165.3) scale(0.1)"><text font-size="59" fill="#000" stroke="#000" stroke-width="1" font-family="Liberation Sans" textLength="140" lengthAdjust="spacingAndGlyphs">-K302</text></g><g transform="translate(396.5,172) scale(0.1)"><text font-size="33" fill="#888" text-anchor="start" font-family="Liberation Mono" font-style="italic" textLength="95">/25.3</text></g><g transform="translate(360,185.5) rotate(-90) scale(0.1)"><text font-size="27" fill="#dc5068" font-weight="bold" text-anchor="middle" font-family="Liberation Mono">13</text></g><g transform="translate(360,197.7) rotate(-90) scale(0.1)"><text font-size="27" fill="#dc5068" font-weight="bold" text-anchor="middle" font-family="Liberation Mono">14</text></g><g transform="translate(419,185.5) rotate(-90) scale(0.1)"><text font-size="27" fill="#dc5068" font-weight="bold" text-anchor="middle" font-family="Liberation Mono">21</text></g><g transform="translate(419,197.7) rotate(-90) scale(0.1)"><text font-size="27" fill="#dc5068" font-weight="bold" text-anchor="middle" font-family="Liberation Mono">22</text></g><g transform="translate(410.3,160.3) rotate(-90) scale(0.1)"><text font-size="27" fill="#dc5068" font-weight="bold" text-anchor="middle" font-family="Liberation Mono">24</text></g><g transform="translate(419,160.3) rotate(-90) scale(0.1)"><text font-size="27" fill="#dc5068" font-weight="bold" text-anchor="middle" font-family="Liberation Mono">21</text></g><g transform="translate(419,173) rotate(-90) scale(0.1)"><text font-size="27" fill="#dc5068" font-weight="bold" text-anchor="middle" font-family="Liberation Mono">22</text></g><g transform="translate(359,220.5) rotate(-90) scale(0.1)"><text font-size="24" fill="#dc5068" font-weight="bold" text-anchor="middle" font-family="Liberation Mono">1</text></g><g transform="translate(418.2,220.5) rotate(-90) scale(0.1)"><text font-size="24" fill="#dc5068" font-weight="bold" text-anchor="middle" font-family="Liberation Mono">1</text></g><rect x="331.8" y="218.6" width="58.7" height="38" rx="2" stroke="#555" fill="none" stroke-width=".7"/><rect x="390.5" y="218.6" width="58.7" height="38" rx="2" stroke="#555" fill="none" stroke-width=".7"/><path d="M331.8 232H449.2M331.8 244H449.2" stroke="#555" stroke-width="0.65" fill="none" /><circle cx="361.5" cy="225.4" r="1.2" stroke="#555" fill="#fff" stroke-width=".7"/><g transform="translate(361.5,234.8) scale(0.1)"><text font-size="43" fill="#222" text-anchor="middle" font-family="Liberation Mono" textLength="260" lengthAdjust="spacingAndGlyphs" font-weight="bold">Motor Betrieb</text></g><g transform="translate(361.5,252.8) scale(0.1)"><text font-size="43" fill="#222" text-anchor="middle" font-family="Liberation Mono" textLength="340" lengthAdjust="spacingAndGlyphs" font-weight="bold">Digitaler Eingang</text></g><g transform="translate(352.8,265) scale(0.1)"><text font-size="59" fill="#000" stroke="#000" stroke-width="1" font-family="Liberation Sans" textLength="174" lengthAdjust="spacingAndGlyphs">-K_DI0</text></g><circle cx="420.3" cy="225.4" r="1.2" stroke="#555" fill="#fff" stroke-width=".7"/><g transform="translate(420.3,234.8) scale(0.1)"><text font-size="43" fill="#222" text-anchor="middle" font-family="Liberation Mono" textLength="260" lengthAdjust="spacingAndGlyphs" font-weight="bold">Motor Störung</text></g><g transform="translate(420.3,252.8) scale(0.1)"><text font-size="43" fill="#222" text-anchor="middle" font-family="Liberation Mono" textLength="340" lengthAdjust="spacingAndGlyphs" font-weight="bold">Digitaler Eingang</text></g><g transform="translate(411.6,265) scale(0.1)"><text font-size="59" fill="#000" stroke="#000" stroke-width="1" font-family="Liberation Sans" textLength="174" lengthAdjust="spacingAndGlyphs">-K_DI0</text></g><g transform="translate(284.5,371.2) scale(0.1)"><text font-size="36" fill="#444" text-anchor="start" font-family="Liberation Mono" textLength="95" lengthAdjust="spacingAndGlyphs" stroke="#444" stroke-width="1.2">/25.2</text></g><path d="M296.5 370H300M303 370H311" stroke="#555" stroke-width="0.5" fill="none" /><path d="M300 370L303 368.8" stroke="#444" stroke-width="0.5" fill="none" /><rect x="294.6" y="368.5" width="1.7" height="2.6" fill="#d8304a"/><rect x="310.8" y="368.5" width="1.7" height="2.6" fill="#d8304a"/><g transform="translate(284.5,375.3) scale(0.1)"><text font-size="36" fill="#444" text-anchor="start" font-family="Liberation Mono" textLength="95" lengthAdjust="spacingAndGlyphs" stroke="#444" stroke-width="1.2">/25.3</text></g><path d="M296.5 374.1H300M303 374.1H311" stroke="#555" stroke-width="0.5" fill="none" /><path d="M300 374.1L303 372.9" stroke="#444" stroke-width="0.5" fill="none" /><rect x="294.6" y="372.6" width="1.7" height="2.6" fill="#d8304a"/><rect x="310.8" y="372.6" width="1.7" height="2.6" fill="#d8304a"/><g transform="translate(284.5,379.4) scale(0.1)"><text font-size="36" fill="#444" text-anchor="start" font-family="Liberation Mono" textLength="95" lengthAdjust="spacingAndGlyphs" stroke="#444" stroke-width="1.2">/25.4</text></g><path d="M296.5 378.2H300M303 378.2H311" stroke="#555" stroke-width="0.5" fill="none" /><path d="M300 378.2L303 377" stroke="#444" stroke-width="0.5" fill="none" /><rect x="294.6" y="376.7" width="1.7" height="2.6" fill="#d8304a"/><rect x="310.8" y="376.7" width="1.7" height="2.6" fill="#d8304a"/><g transform="translate(284.5,383.5) scale(0.1)"><text font-size="36" fill="#444" text-anchor="start" font-family="Liberation Mono" textLength="95" lengthAdjust="spacingAndGlyphs" stroke="#444" stroke-width="1.2">/25.6</text></g><path d="M296.5 382.3H300M303 382.3H311" stroke="#555" stroke-width="0.5" fill="none" /><path d="M300 382.3L303 381.1" stroke="#444" stroke-width="0.5" fill="none" /><rect x="294.6" y="380.8" width="1.7" height="2.6" fill="#d8304a"/><rect x="310.8" y="380.8" width="1.7" height="2.6" fill="#d8304a"/><g transform="translate(37,403.2) scale(0.1)"><text font-size="40" fill="#555" text-anchor="start" font-family="Liberation Mono" textLength="120" lengthAdjust="spacingAndGlyphs" stroke="#555" stroke-width="0.8">aus 24</text></g><g transform="translate(476,403.2) scale(0.1)"><text font-size="40" fill="#555" text-anchor="start" font-family="Liberation Mono" textLength="273" lengthAdjust="spacingAndGlyphs" stroke="#555" stroke-width="0.8">nach  =A1+PS/1</text></g><path d="M32 407.5H518" stroke="#7d7d7d" stroke-width="0.9" fill="none" /><path d="M32 413.7H175.3M32 419.8H175.3M32 426H175.3" stroke="#7d7d7d" stroke-width="0.9" fill="none" /><path d="M52.5 407.5V432.5M86.3 407.5V432.5M102.8 407.5V432.5M116 407.5V432.5M137.2 407.5V432.5M175.3 407.5V432.5M243 407.5V432.5M308.7 407.5V432.5M371.7 407.5V432.5" stroke="#7d7d7d" stroke-width="0.9" fill="none" /><path d="M430.6 407.5V420M458.7 407.5V420M444.8 420V432.5M486.8 420V432.5M430.6 413.7H518M371.7 420H518M486.8 426H518" stroke="#7d7d7d" stroke-width="0.9" fill="none" /><g transform="translate(36,431) scale(0.1)"><text font-size="40" fill="#444" text-anchor="start" font-family="Liberation Mono" textLength="140" lengthAdjust="spacingAndGlyphs" stroke="#444" stroke-width="0.8">Zustand</text></g><g transform="translate(62,431) scale(0.1)"><text font-size="40" fill="#444" text-anchor="start" font-family="Liberation Mono" textLength="160" lengthAdjust="spacingAndGlyphs" stroke="#444" stroke-width="0.8">Änderung</text></g><g transform="translate(90,431) scale(0.1)"><text font-size="40" fill="#444" text-anchor="start" font-family="Liberation Mono" textLength="100" lengthAdjust="spacingAndGlyphs" stroke="#444" stroke-width="0.8">Datum</text></g><g transform="translate(105.3,431) scale(0.1)"><text font-size="40" fill="#444" text-anchor="start" font-family="Liberation Mono" textLength="80" lengthAdjust="spacingAndGlyphs" stroke="#444" stroke-width="0.8">Name</text></g><g transform="translate(118,431) scale(0.1)"><text font-size="40" fill="#444" text-anchor="start" font-family="Liberation Mono" textLength="80" lengthAdjust="spacingAndGlyphs" stroke="#444" stroke-width="0.8">Norm</text></g><g transform="translate(118,412) scale(0.1)"><text font-size="40" fill="#444" text-anchor="start" font-family="Liberation Mono" textLength="100" lengthAdjust="spacingAndGlyphs" stroke="#444" stroke-width="0.8">Datum</text></g><g transform="translate(118,418.2) scale(0.1)"><text font-size="40" fill="#444" text-anchor="start" font-family="Liberation Mono" textLength="120" lengthAdjust="spacingAndGlyphs" stroke="#444" stroke-width="0.8">Bearb.</text></g><g transform="translate(118,424.4) scale(0.1)"><text font-size="40" fill="#444" text-anchor="start" font-family="Liberation Mono" textLength="100" lengthAdjust="spacingAndGlyphs" stroke="#444" stroke-width="0.8">Gepr.</text></g><g transform="translate(139,412.4) scale(0.1)"><text font-size="40" fill="#444" text-anchor="start" font-family="Liberation Mono" textLength="160" lengthAdjust="spacingAndGlyphs" stroke="#444" stroke-width="0.8">08.09.23</text></g><g transform="translate(139,418.6) scale(0.1)"><text font-size="40" fill="#444" text-anchor="start" font-family="Liberation Mono" textLength="100" lengthAdjust="spacingAndGlyphs" stroke="#444" stroke-width="0.8">Mamel</text></g><g transform="translate(139,431.2) scale(0.1)"><text font-size="40" fill="#444" text-anchor="start" font-family="Liberation Mono" textLength="180" lengthAdjust="spacingAndGlyphs" stroke="#444" stroke-width="0.8">DIN 81346</text></g><g transform="translate(177,411.4) scale(0.1)"><text font-size="40" fill="#444" text-anchor="start" font-family="Liberation Mono" textLength="240" lengthAdjust="spacingAndGlyphs" stroke="#444" stroke-width="0.8">DEMO Projekt</text></g><g transform="translate(373,411.8) scale(0.1)"><text font-size="40" fill="#777" text-anchor="start" font-family="Liberation Mono" textLength="224" lengthAdjust="spacingAndGlyphs" stroke="#777" stroke-width="0.6">Projekt-Nummer</text></g><g transform="translate(432,411.6) scale(0.1)"><text font-size="40" fill="#777" text-anchor="start" font-family="Liberation Mono" textLength="120" lengthAdjust="spacingAndGlyphs" stroke="#777" stroke-width="0.6">Anlage</text></g><g transform="translate(432,418) scale(0.1)"><text font-size="40" fill="#777" text-anchor="start" font-family="Liberation Mono" textLength="60" lengthAdjust="spacingAndGlyphs" stroke="#777" stroke-width="0.6">Ort</text></g><g transform="translate(461,412.2) scale(0.1)"><text font-size="40" fill="#777" text-anchor="start" font-family="Liberation Mono" textLength="60" lengthAdjust="spacingAndGlyphs" stroke="#777" stroke-width="0.6">=A1</text></g><g transform="translate(461,418.4) scale(0.1)"><text font-size="40" fill="#777" text-anchor="start" font-family="Liberation Mono" textLength="60" lengthAdjust="spacingAndGlyphs" stroke="#777" stroke-width="0.6">+ST</text></g><g transform="translate(373,424.2) scale(0.1)"><text font-size="40" fill="#777" text-anchor="start" font-family="Liberation Mono" textLength="256" lengthAdjust="spacingAndGlyphs" stroke="#777" stroke-width="0.6">Zeichnungsnummer</text></g><g transform="translate(373,430.6) scale(0.1)"><text font-size="40" fill="#777" text-anchor="start" font-family="Liberation Mono" textLength="140" lengthAdjust="spacingAndGlyphs" stroke="#777" stroke-width="0.6">10/2023</text></g><g transform="translate(447,430.6) scale(0.1)"><text font-size="40" fill="#777" text-anchor="start" font-family="Liberation Mono" textLength="80" lengthAdjust="spacingAndGlyphs" stroke="#777" stroke-width="0.6">A071</text></g><g transform="translate(488.5,424.6) scale(0.1)"><text font-size="40" fill="#777" text-anchor="start" font-family="Liberation Mono" textLength="100" lengthAdjust="spacingAndGlyphs" stroke="#777" stroke-width="0.6">Blatt</text></g><g transform="translate(488.5,430.8) scale(0.1)"><text font-size="40" fill="#777" text-anchor="start" font-family="Liberation Mono" textLength="60" lengthAdjust="spacingAndGlyphs" stroke="#777" stroke-width="0.6">von</text></g><g transform="translate(516.5,424.6) scale(0.1)"><text font-size="40" fill="#777" text-anchor="end" font-family="Liberation Mono" textLength="40" lengthAdjust="spacingAndGlyphs" stroke="#777" stroke-width="0.6">25</text></g><g transform="translate(516.5,430.8) scale(0.1)"><text font-size="40" fill="#777" text-anchor="end" font-family="Liberation Mono" textLength="60" lengthAdjust="spacingAndGlyphs" stroke="#777" stroke-width="0.6">555</text></g><path d="M247 418.2Q254 418.6 262 421.5V422.6Q255 422.6 247 418.2Z" fill="#efd52e"/><rect x="261" y="418.9" width="41.5" height="3.5" fill="#efd52e"/><g stroke="#151d36" stroke-width="2.8" fill="none" stroke-linejoin="miter"><path d="M273 415.3H263Q259.5 415.3 259.5 418.4V421.3Q259.5 424.4 263 424.4H273"/><path d="M274.6 425.8L280.6 415.3H283.6L289.2 425.8"/><path d="M291.2 415.3H300.5Q304.6 415.3 304.6 418.5V421.2Q304.6 424.4 300.5 424.4H291.2"/></g><g transform="translate(245.2,417.7) scale(0.1)"><text font-size="52" fill="#1b2233" text-anchor="start" font-family="Liberation Sans" font-weight="bold" textLength="115" lengthAdjust="spacingAndGlyphs">WS</text></g><g transform="translate(538,236.9) scale(0.1)"><text font-size="34" fill="#666" text-anchor="start" font-family="Liberation Mono" textLength="90" lengthAdjust="spacingAndGlyphs" stroke="#666" stroke-width="1.2">/25.8</text></g><g transform="translate(551.3,236.4) scale(0.1)"><text font-size="32" fill="#000" stroke="#000" stroke-width="1" font-family="Liberation Sans" textLength="50" lengthAdjust="spacingAndGlyphs">PS1</text></g><path d="M548.3 234.6L550 235.4L548.3 236.2Z" fill="#333"/><g transform="translate(538,241.1) scale(0.1)"><text font-size="34" fill="#666" text-anchor="start" font-family="Liberation Mono" textLength="72" lengthAdjust="spacingAndGlyphs" stroke="#666" stroke-width="1.2">/2.0</text></g><g transform="translate(551.3,240.6) scale(0.1)"><text font-size="32" fill="#000" stroke="#000" stroke-width="1" font-family="Liberation Sans" textLength="50" lengthAdjust="spacingAndGlyphs">PS2</text></g><path d="M548.3 238.8L550 239.6L548.3 240.4Z" fill="#333"/><g transform="translate(538,245.3) scale(0.1)"><text font-size="34" fill="#666" text-anchor="start" font-family="Liberation Mono" textLength="90" lengthAdjust="spacingAndGlyphs" stroke="#666" stroke-width="1.2">/25.8</text></g><g transform="translate(551.3,244.8) scale(0.1)"><text font-size="32" fill="#000" stroke="#000" stroke-width="1" font-family="Liberation Sans" textLength="50" lengthAdjust="spacingAndGlyphs">PS3</text></g><path d="M548.3 243L550 243.8L548.3 244.6Z" fill="#333"/><g transform="translate(538,249.5) scale(0.1)"><text font-size="34" fill="#666" text-anchor="start" font-family="Liberation Mono" textLength="90" lengthAdjust="spacingAndGlyphs" stroke="#666" stroke-width="1.2">/25.8</text></g><g transform="translate(551.3,249) scale(0.1)"><text font-size="32" fill="#000" stroke="#000" stroke-width="1" font-family="Liberation Sans" textLength="50" lengthAdjust="spacingAndGlyphs">PS4</text></g><path d="M548.3 247.2L550 248L548.3 248.8Z" fill="#333"/><path d="M551 244H562.8V298.4M551 248.4H570.8V298.4" stroke="#555" stroke-width="0.65" fill="none" /><path d="M569.5 249.8L570.8 252L572.2 249.8" stroke="#555" stroke-width="0.6" fill="none" /><g transform="translate(589,291.6) scale(0.1)"><text font-size="58" fill="#222" text-anchor="start" font-family="Liberation Sans" textLength="285">-&lt;SeitexK2</text></g><g transform="translate(559,297.6) scale(0.1)"><text font-size="32" fill="#d8405a" text-anchor="start" font-family="Liberation Mono" font-weight="bold">2</text></g><g transform="translate(567.3,297.6) scale(0.1)"><text font-size="32" fill="#d8405a" text-anchor="start" font-family="Liberation Mono" font-weight="bold">4</text></g><g transform="translate(575,297.4) scale(0.1)"><text font-size="36" fill="#d8405a" text-anchor="start" font-family="Liberation Mono" font-weight="bold">X1</text></g><g transform="translate(614.5,297.4) scale(0.1)"><text font-size="36" fill="#d8405a" text-anchor="start" font-family="Liberation Mono" font-weight="bold" textLength="65" lengthAdjust="spacingAndGlyphs">Bus</text></g><path d="M579.3 294V298.5M621.3 294V298.5" stroke="#d8405a" stroke-width="0.5" fill="none" /><rect x="558" y="298.8" width="67.5" height="105" rx="1.5" stroke="#555" fill="#fff" stroke-width=".8"/><path d="M558 319.2H625.5" stroke="#222" stroke-width="1" fill="none" /><path d="M558 369.8H625.5M587.5 369.8V403.8" stroke="#555" stroke-width="0.7" fill="none" /><path d="M559 308.2H584" stroke="#8fd0d4" stroke-width="0.6" fill="none" stroke-dasharray="1 .8"/><path d="M584 308.2H624.5" stroke="#e9b4b8" stroke-width="0.6" fill="none" stroke-dasharray="1 .8"/><g transform="translate(559.3,315.8) scale(0.1)"><text font-size="65" fill="#10a3a0" text-anchor="start" font-family="Liberation Sans" font-weight="bold" stroke="#10a3a0" stroke-width="1.6" textLength="237" lengthAdjust="spacingAndGlyphs">SIEMENS</text></g><g transform="translate(593.3,314.3) scale(0.1)"><text font-size="39" fill="#2a2a2a" text-anchor="start" font-family="Liberation Mono" textLength="230.4" lengthAdjust="spacingAndGlyphs" stroke="#2a2a2a" stroke-width="1">CPU 315-2 DP</text></g><g transform="translate(595,318.3) scale(0.1)"><text font-size="39" fill="#2a2a2a" text-anchor="start" font-family="Liberation Mono" textLength="192" lengthAdjust="spacingAndGlyphs" stroke="#2a2a2a" stroke-width="1">Allg. Text</text></g><rect x="560.3" y="321.6" width="20.7" height="5.4" stroke="#444" fill="none" stroke-width=".6"/><g transform="translate(562,325.8) scale(0.1)"><text font-size="39" fill="#2a2a2a" text-anchor="start" font-family="Liberation Mono" textLength="134.4" lengthAdjust="spacingAndGlyphs" stroke="#2a2a2a" stroke-width="1">2(, 2("</text></g><g transform="translate(560.5,329.8) scale(0.1)"><text font-size="39" fill="#111" text-anchor="start" font-family="Liberation Mono" textLength="259" lengthAdjust="spacingAndGlyphs" font-weight="bold">SIEMENS SYSTEM</text></g><rect x="593.7" y="326" width="2" height="3.2" stroke="#333" fill="none" stroke-width=".55"/><g transform="translate(598,328.9) scale(0.1)"><text font-size="39" fill="#2a2a2a" text-anchor="start" font-family="Liberation Mono" textLength="38.4" lengthAdjust="spacingAndGlyphs" stroke="#2a2a2a" stroke-width="1">SF</text></g><rect x="593.7" y="330.25" width="2" height="3.2" stroke="#333" fill="none" stroke-width=".55"/><g transform="translate(598,333.15) scale(0.1)"><text font-size="39" fill="#2a2a2a" text-anchor="start" font-family="Liberation Mono" textLength="192" lengthAdjust="spacingAndGlyphs" stroke="#2a2a2a" stroke-width="1">Allg. Text</text></g><rect x="593.7" y="334.5" width="2" height="3.2" stroke="#333" fill="none" stroke-width=".55"/><g transform="translate(598,337.4) scale(0.1)"><text font-size="39" fill="#2a2a2a" text-anchor="start" font-family="Liberation Mono" textLength="76.8" lengthAdjust="spacingAndGlyphs" stroke="#2a2a2a" stroke-width="1">DC5V</text></g><rect x="593.7" y="338.75" width="2" height="3.2" stroke="#333" fill="none" stroke-width=".55"/><g transform="translate(598,341.65) scale(0.1)"><text font-size="39" fill="#111" text-anchor="start" font-family="Liberation Mono" textLength="76.8" lengthAdjust="spacingAndGlyphs" font-weight="bold">FRCE</text></g><g transform="translate(609.52,341.65) scale(0.1)"><text font-size="39" fill="#2a2a2a" text-anchor="start" font-family="Liberation Mono" textLength="76.8" lengthAdjust="spacingAndGlyphs" stroke="#2a2a2a" stroke-width="1">Text</text></g><rect x="593.7" y="343" width="2" height="3.2" stroke="#333" fill="none" stroke-width=".55"/><g transform="translate(598,345.9) scale(0.1)"><text font-size="39" fill="#111" text-anchor="start" font-family="Liberation Mono" textLength="76.8" lengthAdjust="spacingAndGlyphs" font-weight="bold">RUN </text></g><g transform="translate(609.52,345.9) scale(0.1)"><text font-size="39" fill="#2a2a2a" text-anchor="start" font-family="Liberation Mono" textLength="76.8" lengthAdjust="spacingAndGlyphs" stroke="#2a2a2a" stroke-width="1">Text</text></g><rect x="593.7" y="347.25" width="2" height="3.2" stroke="#333" fill="none" stroke-width=".55"/><g transform="translate(598,350.15) scale(0.1)"><text font-size="39" fill="#111" text-anchor="start" font-family="Liberation Mono" textLength="76.8" lengthAdjust="spacingAndGlyphs" font-weight="bold">STOP</text></g><g transform="translate(609.52,350.15) scale(0.1)"><text font-size="39" fill="#2a2a2a" text-anchor="start" font-family="Liberation Mono" textLength="76.8" lengthAdjust="spacingAndGlyphs" stroke="#2a2a2a" stroke-width="1">Text</text></g><rect x="593.7" y="351.5" width="2" height="3.2" stroke="#333" fill="none" stroke-width=".55"/><g transform="translate(598,354.4) scale(0.1)"><text font-size="39" fill="#2a2a2a" text-anchor="start" font-family="Liberation Mono" textLength="192" lengthAdjust="spacingAndGlyphs" stroke="#2a2a2a" stroke-width="1">Allg. Text</text></g><rect x="616.8" y="330.6" width="4.4" height="30" rx="1.5" stroke="#666" fill="#c6c6c6" stroke-width=".6"/><g transform="translate(563.3,343.3) scale(0.1)"><text font-size="39" fill="#2a2a2a" text-anchor="start" font-family="Liberation Mono" textLength="96" lengthAdjust="spacingAndGlyphs" stroke="#2a2a2a" stroke-width="1">RUN-P</text></g><g transform="translate(563.3,347.4) scale(0.1)"><text font-size="39" fill="#2a2a2a" text-anchor="start" font-family="Liberation Mono" textLength="192" lengthAdjust="spacingAndGlyphs" stroke="#2a2a2a" stroke-width="1">Allg. Text</text></g><g transform="translate(563.3,351.5) scale(0.1)"><text font-size="39" fill="#2a2a2a" text-anchor="start" font-family="Liberation Mono" textLength="57.6" lengthAdjust="spacingAndGlyphs" stroke="#2a2a2a" stroke-width="1">RUN</text></g><g transform="translate(563.3,355.6) scale(0.1)"><text font-size="39" fill="#2a2a2a" text-anchor="start" font-family="Liberation Mono" textLength="96" lengthAdjust="spacingAndGlyphs" stroke="#2a2a2a" stroke-width="1">Allg.</text></g><g transform="translate(563.3,359.7) scale(0.1)"><text font-size="39" fill="#2a2a2a" text-anchor="start" font-family="Liberation Mono" textLength="76.8" lengthAdjust="spacingAndGlyphs" stroke="#2a2a2a" stroke-width="1">STOP</text></g><g transform="translate(563.3,363.8) scale(0.1)"><text font-size="39" fill="#2a2a2a" text-anchor="start" font-family="Liberation Mono" textLength="96" lengthAdjust="spacingAndGlyphs" stroke="#2a2a2a" stroke-width="1">Allg.</text></g><g transform="translate(563.3,367.9) scale(0.1)"><text font-size="39" fill="#2a2a2a" text-anchor="start" font-family="Liberation Mono" textLength="76.8" lengthAdjust="spacingAndGlyphs" stroke="#2a2a2a" stroke-width="1">MRES</text></g><g transform="translate(563.3,372) scale(0.1)"><text font-size="39" fill="#2a2a2a" text-anchor="start" font-family="Liberation Mono" textLength="192" lengthAdjust="spacingAndGlyphs" stroke="#2a2a2a" stroke-width="1">Allg. Text</text></g><path d="M579 341V367M576 342.8H582V350H576ZM576 354H582V361H576Z" stroke="#333" stroke-width="0.6" fill="none" /><ellipse cx="580.5" cy="347" rx="1.5" ry="2.6" stroke="#333" fill="#fff" stroke-width=".6"/><g transform="translate(569,381.2) scale(0.1)"><text font-size="39" fill="#2a2a2a" text-anchor="start" font-family="Liberation Mono" textLength="134.4" lengthAdjust="spacingAndGlyphs" stroke="#2a2a2a" stroke-width="1">2(, 2("</text></g><g transform="translate(567,385.8) scale(0.1)"><text font-size="39" fill="#111" text-anchor="start" font-family="Liberation Mono" textLength="222" lengthAdjust="spacingAndGlyphs" font-weight="bold">SIEMENS SYSP</text></g><g transform="translate(569,390.3) scale(0.1)"><text font-size="39" fill="#2a2a2a" text-anchor="start" font-family="Liberation Mono" textLength="115.2" lengthAdjust="spacingAndGlyphs" stroke="#2a2a2a" stroke-width="1">%X-@-H</text></g><circle cx="564" cy="385" r="3.3" stroke="#333" fill="#fff" stroke-width=".8"/><circle cx="564" cy="385" r="1.8" stroke="#666" fill="none" stroke-width=".5"/><path d="M595.3 393V381Q595.3 378.3 598.3 378.3Q601.3 378.3 601.3 381V393" stroke="#444" fill="#c9c9c9" stroke-width=".7"/><path d="M597.1 393V382.5Q597.1 381 598.3 381Q599.5 381 599.5 382.5V393" stroke="#555" fill="#fff" stroke-width=".5"/><path d="M614.5 393V381Q614.5 378.3 617.5 378.3Q620.5 378.3 620.5 381V393" stroke="#444" fill="#c9c9c9" stroke-width=".7"/><path d="M616.3 393V382.5Q616.3 381 617.5 381Q618.7 381 618.7 382.5V393" stroke="#555" fill="#fff" stroke-width=".5"/><g transform="translate(590.5,391) scale(0.1)"><text font-size="39" fill="#111" text-anchor="start" font-family="Liberation Mono" textLength="96" lengthAdjust="spacingAndGlyphs" font-weight="bold">3p DP</text></g><g transform="translate(609,391) scale(0.1)"><text font-size="39" fill="#2a2a2a" text-anchor="start" font-family="Liberation Mono" textLength="38.4" lengthAdjust="spacingAndGlyphs" stroke="#2a2a2a" stroke-width="1">X2</text></g><g transform="translate(590.5,395) scale(0.1)"><text font-size="39" fill="#2a2a2a" text-anchor="start" font-family="Liberation Mono" textLength="345.6" lengthAdjust="spacingAndGlyphs" stroke="#2a2a2a" stroke-width="1">Allg.TextAllg.Text</text></g><g transform="translate(594.5,399.2) scale(0.1)"><text font-size="39" fill="#2a2a2a" text-anchor="start" font-family="Liberation Mono" textLength="57.6" lengthAdjust="spacingAndGlyphs" stroke="#2a2a2a" stroke-width="1">MPI</text></g><g transform="translate(617,399.2) scale(0.1)"><text font-size="39" fill="#2a2a2a" text-anchor="start" font-family="Liberation Mono" textLength="38.4" lengthAdjust="spacingAndGlyphs" stroke="#2a2a2a" stroke-width="1">DP</text></g><g transform="translate(594.5,403.4) scale(0.1)"><text font-size="39" fill="#2a2a2a" text-anchor="start" font-family="Liberation Mono" textLength="422.4" lengthAdjust="spacingAndGlyphs" stroke="#2a2a2a" stroke-width="1">Allg. Text  Allg. Text</text></g></svg>
</div></body></html>
